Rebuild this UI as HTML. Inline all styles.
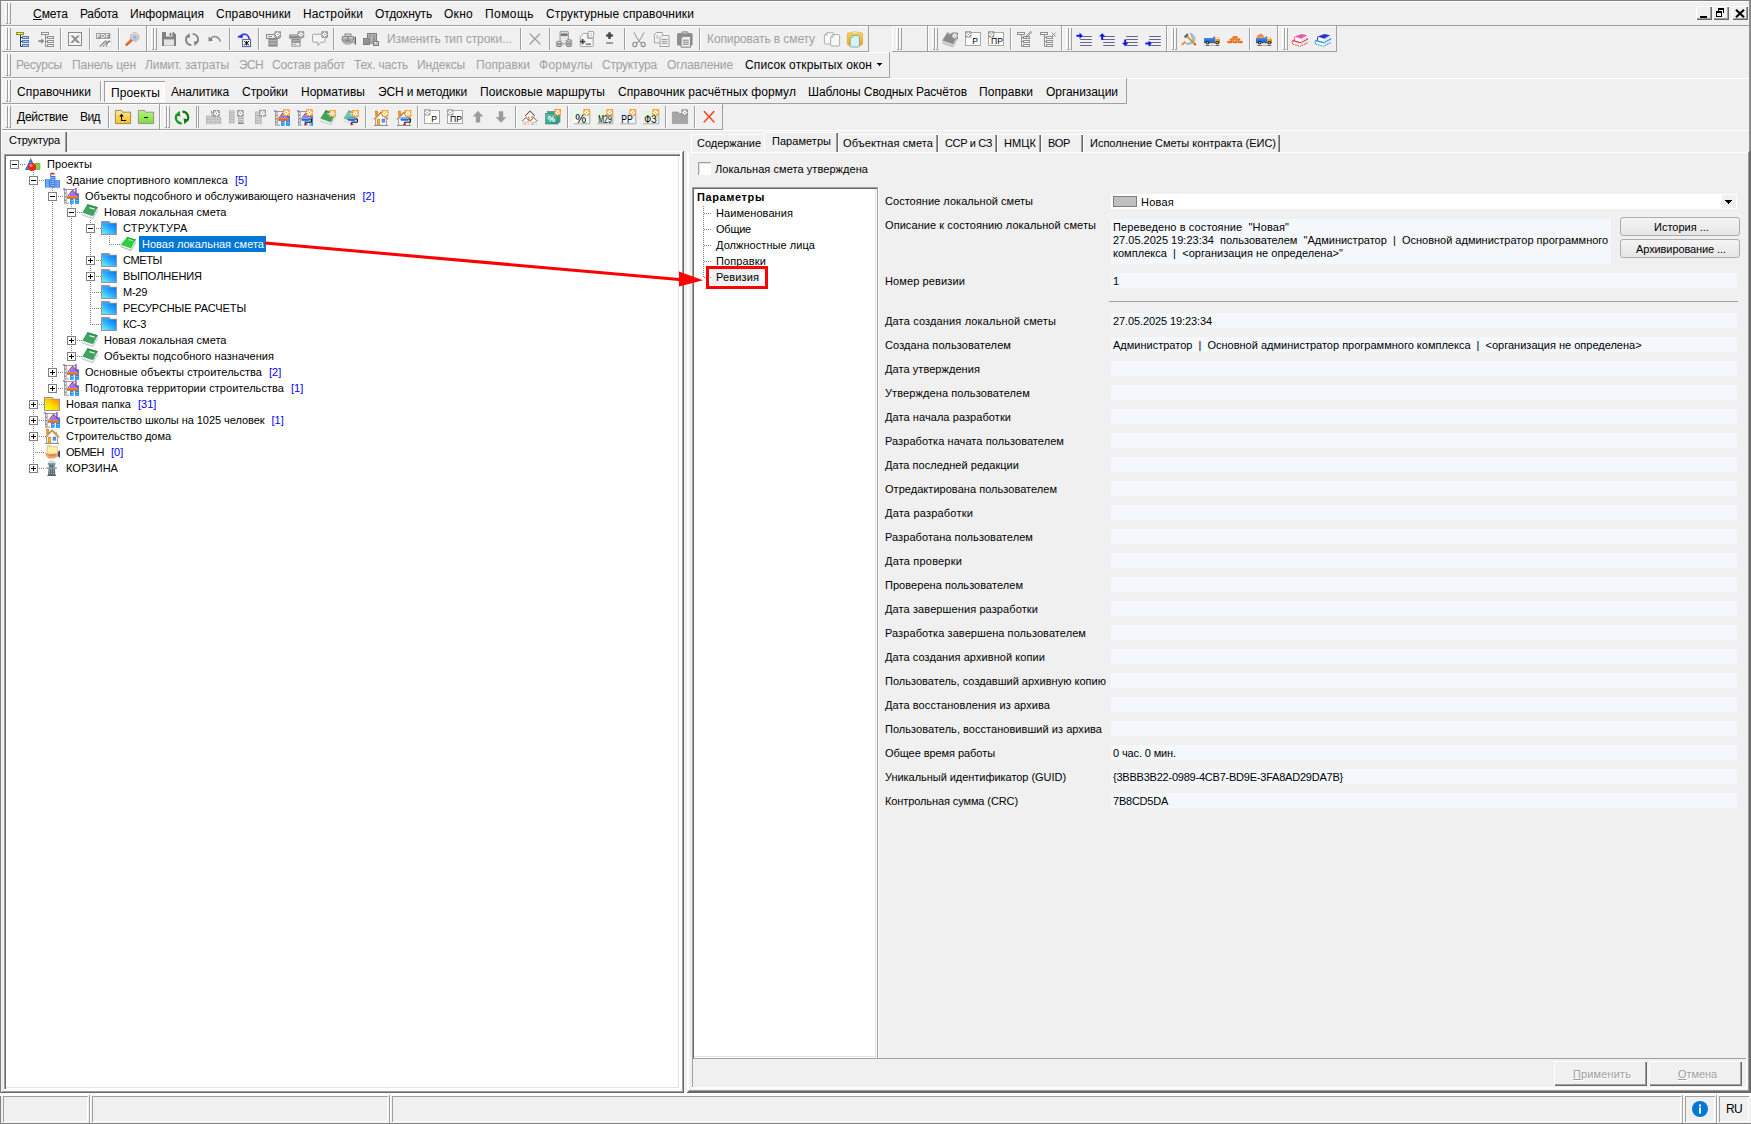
<!DOCTYPE html>
<html lang="ru"><head><meta charset="utf-8"><title>Смета</title>
<style>
html,body{margin:0;padding:0}
body{width:1751px;height:1124px;background:#f0f0f0;position:relative;overflow:hidden;font-family:"Liberation Sans",sans-serif}
.t{position:absolute;white-space:pre;}
.i{position:absolute;overflow:visible}
</style></head><body>
<svg width="0" height="0" style="position:absolute"><defs><linearGradient id="gfb" x1="0" y1="1" x2="1" y2="0"><stop offset="0" stop-color="#6cf4ff"/><stop offset="0.55" stop-color="#2aa8ff"/><stop offset="1" stop-color="#0a72f0"/></linearGradient><linearGradient id="gfy" x1="0" y1="1" x2="1" y2="0"><stop offset="0" stop-color="#ffff10"/><stop offset="0.5" stop-color="#ffd800"/><stop offset="1" stop-color="#ff8c00"/></linearGradient><radialGradient id="glens" cx="0.5" cy="0.55" r="0.5"><stop offset="0" stop-color="#8aa8ec"/><stop offset="0.7" stop-color="#bcd0f6"/><stop offset="1" stop-color="#f4f8ff"/></radialGradient><linearGradient id="gclip" x1="0" y1="0" x2="0" y2="1"><stop offset="0" stop-color="#ffd648"/><stop offset="1" stop-color="#ffa600"/></linearGradient><linearGradient id="gtrk" x1="0" y1="0" x2="0" y2="1"><stop offset="0" stop-color="#4aa0f8"/><stop offset="1" stop-color="#1a5cd0"/></linearGradient><linearGradient id="gcab" x1="0" y1="0" x2="1" y2="1"><stop offset="0" stop-color="#ffc040"/><stop offset="1" stop-color="#e87800"/></linearGradient><linearGradient id="gfu" x1="0" y1="0" x2="0" y2="1"><stop offset="0" stop-color="#ffe98a"/><stop offset="1" stop-color="#ffbe1e"/></linearGradient><linearGradient id="gfg" x1="0" y1="0" x2="0" y2="1"><stop offset="0" stop-color="#b6f47a"/><stop offset="1" stop-color="#7cdc3a"/></linearGradient><linearGradient id="gteal" x1="0" y1="0" x2="1" y2="1"><stop offset="0" stop-color="#58c4a8"/><stop offset="1" stop-color="#1e9880"/></linearGradient></defs></svg>
<div style="position:absolute;left:0px;top:0px;width:1751px;height:1px;background:#828282"></div>
<div style="position:absolute;left:0px;top:0px;width:1px;height:1124px;background:#828282"></div>
<div style="position:absolute;left:1px;top:1px;width:1749px;height:1px;background:#fff"></div>
<div style="position:absolute;left:1px;top:25px;width:1748px;height:1px;background:#a0a0a0"></div>
<div style="position:absolute;left:5px;top:3px;width:1px;height:20px;background:#fff"></div>
<div style="position:absolute;left:5px;top:3px;width:2px;height:1px;background:#fff"></div>
<div style="position:absolute;left:7px;top:3px;width:1px;height:21px;background:#a0a0a0"></div>
<div style="position:absolute;left:6px;top:23px;width:2px;height:1px;background:#a0a0a0"></div>
<div style="position:absolute;left:8px;top:3px;width:1px;height:20px;background:#fff"></div>
<div style="position:absolute;left:8px;top:3px;width:2px;height:1px;background:#fff"></div>
<div style="position:absolute;left:10px;top:3px;width:1px;height:21px;background:#a0a0a0"></div>
<div style="position:absolute;left:9px;top:23px;width:2px;height:1px;background:#a0a0a0"></div>
<div class="t " style="left:33px;top:7px;font-size:12px;line-height:14px;color:#000;letter-spacing:-0.047px;"><u>С</u>мета</div>
<div class="t " style="left:80px;top:7px;font-size:12px;line-height:14px;color:#000;letter-spacing:-0.268px;">Работа</div>
<div class="t " style="left:130px;top:7px;font-size:12px;line-height:14px;color:#000;letter-spacing:0.052px;">Информация</div>
<div class="t " style="left:216px;top:7px;font-size:12px;line-height:14px;color:#000;letter-spacing:0.209px;">Справочники</div>
<div class="t " style="left:303px;top:7px;font-size:12px;line-height:14px;color:#000;letter-spacing:0.128px;">Настройки</div>
<div class="t " style="left:375px;top:7px;font-size:12px;line-height:14px;color:#000;letter-spacing:-0.151px;">Отдохнуть</div>
<div class="t " style="left:444px;top:7px;font-size:12px;line-height:14px;color:#000;letter-spacing:0.277px;">Окно</div>
<div class="t " style="left:485px;top:7px;font-size:12px;line-height:14px;color:#000;letter-spacing:0.440px;">Помощь</div>
<div class="t " style="left:546px;top:7px;font-size:12px;line-height:14px;color:#000;letter-spacing:0.107px;">Структурные справочники</div>
<div style="position:absolute;left:1696px;top:6px;width:16px;height:14px;background:#f0f0f0;box-shadow:inset 1px 1px 0 #fff, inset -1px -1px 0 #696969, inset -2px -2px 0 #a0a0a0"></div>
<div style="position:absolute;left:1713px;top:6px;width:16px;height:14px;background:#f0f0f0;box-shadow:inset 1px 1px 0 #fff, inset -1px -1px 0 #696969, inset -2px -2px 0 #a0a0a0"></div>
<div style="position:absolute;left:1732px;top:6px;width:16px;height:14px;background:#f0f0f0;box-shadow:inset 1px 1px 0 #fff, inset -1px -1px 0 #696969, inset -2px -2px 0 #a0a0a0"></div>
<div style="position:absolute;left:1700px;top:16px;width:7px;height:2px;background:#000"></div>
<svg class="i" style="left:1715px;top:8px" width="12" height="10" viewBox="0 0 12 10" shape-rendering="crispEdges"><path d="M3 0h6v5h-1v-3h-4v1h-1z M1 3h6v6h-6z M2 5v3h4v-3z" fill="#000" fill-rule="evenodd"/></svg>
<svg class="i" style="left:1735px;top:9px" width="10" height="9" viewBox="0 0 10 9"><path d="M1 0.8L9 8.2M9 0.8L1 8.2" stroke="#000" stroke-width="2.1"/></svg>
<div style="position:absolute;left:2px;top:26px;width:145px;height:1px;background:#fff"></div>
<div style="position:absolute;left:2px;top:26px;width:1px;height:26px;background:#fff"></div>
<div style="position:absolute;left:2px;top:51px;width:145px;height:1px;background:#a0a0a0"></div>
<div style="position:absolute;left:146px;top:26px;width:1px;height:26px;background:#a0a0a0"></div>
<div style="position:absolute;left:5px;top:28px;width:1px;height:21px;background:#fff"></div>
<div style="position:absolute;left:5px;top:28px;width:2px;height:1px;background:#fff"></div>
<div style="position:absolute;left:7px;top:28px;width:1px;height:22px;background:#a0a0a0"></div>
<div style="position:absolute;left:6px;top:49px;width:2px;height:1px;background:#a0a0a0"></div>
<div style="position:absolute;left:8px;top:28px;width:1px;height:21px;background:#fff"></div>
<div style="position:absolute;left:8px;top:28px;width:2px;height:1px;background:#fff"></div>
<div style="position:absolute;left:10px;top:28px;width:1px;height:22px;background:#a0a0a0"></div>
<div style="position:absolute;left:9px;top:49px;width:2px;height:1px;background:#a0a0a0"></div>
<svg class="i" style="left:16px;top:32px" width="16" height="16" viewBox="0 0 16 16"><rect x="0.5" y="0.5" width="7" height="2" fill="#ffff00" stroke="#8c8c3c"/><path d="M4.5 3v11.5h2M4.5 5.5h2M4.5 9.5h2" stroke="#1f3864" fill="none"/><rect x="6.5" y="4.5" width="6" height="2" fill="#a9d1ff" stroke="#5a78b0"/><rect x="6.5" y="8.5" width="6" height="2" fill="#a9d1ff" stroke="#5a78b0"/><rect x="6.5" y="12.5" width="6" height="2" fill="#a9d1ff" stroke="#5a78b0"/></svg>
<svg class="i" style="left:39px;top:32px" width="16" height="16" viewBox="0 0 16 16"><g transform="translate(-1 0)"><rect x="3.5" y="0.5" width="7" height="2" fill="#f4f4f4" stroke="#909090"/><path d="M7.5 3v11.5h2M7.5 5.5h2M7.5 9.5h2" stroke="#909090" fill="none"/><rect x="9.5" y="4.5" width="6" height="2" fill="#f4f4f4" stroke="#909090"/><rect x="9.5" y="8.5" width="6" height="2" fill="#f4f4f4" stroke="#909090"/><rect x="9.5" y="12.5" width="6" height="2" fill="#f4f4f4" stroke="#909090"/><path d="M0.3 8.3h3v-2l3 2.8l-3 2.8v-2h-3z" fill="#8a8a8a"/></g></svg>
<svg class="i" style="left:68px;top:32px" width="16" height="16" viewBox="0 0 16 16"><rect x="0.5" y="0.5" width="13" height="13" fill="#f6f6f6" stroke="#8a8a8a"/><path d="M2.4 3.4h3l1.8 2.2L9.4 3.4h2.6L8.6 7l3.6 4H9.2L7 8.6L5 11H2.2L5.8 7z" fill="#909090"/></svg>
<svg class="i" style="left:96px;top:32px" width="16" height="16" viewBox="0 0 16 16"><path d="M3.2 0h9l3 2.6V14.6H3.2z" fill="#fff" stroke="#c8c8c8" stroke-width="0.5"/><rect x="0" y="1.2" width="14.2" height="5.6" fill="#8c8c8c"/><text x="7.1" y="5.9" font-family="Liberation Sans,sans-serif" font-size="5.6" font-weight="bold" fill="#fff" text-anchor="middle" letter-spacing="0.6">PDF</text><path d="M4 14.4C6 12 8 10 10.4 8.4M7 14.4C8.6 12 10.6 10 13.6 8.6M10.4 14.4C10.4 12 11.6 10 14.6 9.4" stroke="#8c8c8c" stroke-width="1.3" fill="none"/></svg>
<svg class="i" style="left:125px;top:32px" width="16" height="16" viewBox="0 0 16 16"><path d="M6.6 8L1.6 12.6" stroke="#d8600c" stroke-width="2.6" stroke-linecap="round"/><path d="M6.2 7.8L1.4 12.2" stroke="#f59040" stroke-width="0.8" stroke-linecap="round"/><circle cx="9.8" cy="4.9" r="4.3" fill="url(#glens)" stroke="#e8915a" stroke-width="0.8"/></svg>
<div style="position:absolute;left:60px;top:28px;width:1px;height:22px;background:#a0a0a0"></div>
<div style="position:absolute;left:61px;top:28px;width:1px;height:22px;background:#fff"></div>
<div style="position:absolute;left:89px;top:28px;width:1px;height:22px;background:#a0a0a0"></div>
<div style="position:absolute;left:90px;top:28px;width:1px;height:22px;background:#fff"></div>
<div style="position:absolute;left:118px;top:28px;width:1px;height:22px;background:#a0a0a0"></div>
<div style="position:absolute;left:119px;top:28px;width:1px;height:22px;background:#fff"></div>
<div style="position:absolute;left:147px;top:26px;width:722px;height:1px;background:#fff"></div>
<div style="position:absolute;left:147px;top:26px;width:1px;height:26px;background:#fff"></div>
<div style="position:absolute;left:147px;top:51px;width:722px;height:1px;background:#a0a0a0"></div>
<div style="position:absolute;left:868px;top:26px;width:1px;height:26px;background:#a0a0a0"></div>
<div style="position:absolute;left:151px;top:28px;width:1px;height:21px;background:#fff"></div>
<div style="position:absolute;left:151px;top:28px;width:2px;height:1px;background:#fff"></div>
<div style="position:absolute;left:153px;top:28px;width:1px;height:22px;background:#a0a0a0"></div>
<div style="position:absolute;left:152px;top:49px;width:2px;height:1px;background:#a0a0a0"></div>
<div style="position:absolute;left:154px;top:28px;width:1px;height:21px;background:#fff"></div>
<div style="position:absolute;left:154px;top:28px;width:2px;height:1px;background:#fff"></div>
<div style="position:absolute;left:156px;top:28px;width:1px;height:22px;background:#a0a0a0"></div>
<div style="position:absolute;left:155px;top:49px;width:2px;height:1px;background:#a0a0a0"></div>
<svg class="i" style="left:161px;top:32px" width="16" height="16" viewBox="0 0 16 16"><path d="M1 0h11.4l2.6 2.4V14H1z" fill="#828282"/><rect x="5" y="0" width="6.4" height="4.6" fill="#ececec"/><rect x="8.6" y="1" width="1.6" height="2.8" fill="#707070"/><rect x="3" y="7.4" width="10" height="6.2" fill="#e4e4e4"/></svg>
<svg class="i" style="left:184px;top:32px" width="16" height="16" viewBox="0 0 16 16"><path d="M7.4 13A5.4 5.4 0 0 1 3 4.4" stroke="#808080" stroke-width="1.7" fill="none"/><path d="M1 5.2L5.4 1L6 5.8z" fill="#808080"/><path d="M8.6 2A5.4 5.4 0 0 1 13 10.6" stroke="#808080" stroke-width="1.7" fill="none"/><path d="M15 9.8L10.6 14L10 9.2z" fill="#808080"/></svg>
<svg class="i" style="left:207px;top:32px" width="16" height="16" viewBox="0 0 16 16"><path d="M3.4 7.4C6 3.2 11.6 3.6 13.4 9.6" stroke="#8a8a8a" stroke-width="1.5" fill="none"/><path d="M1.6 4.6V9.4L6.2 8.6z" fill="#808080"/></svg>
<svg class="i" style="left:237px;top:32px" width="16" height="16" viewBox="0 0 16 16"><path d="M3.6 5.2C5 1 11.2 0.8 12.4 7.4" stroke="#3c3cf0" stroke-width="1.7" fill="none"/><path d="M0.8 4L6 2.4L5.4 6.6z" fill="#2a2af0"/><path d="M0.8 4.2h3v1.4h-3z" fill="#2a2af0"/><rect x="5.6" y="7.6" width="8" height="7" fill="#fff" stroke="#4a5aa8" stroke-width="1"/><path d="M7.2 9.2L12 13.2M12 9.2L7.2 13.2M9.6 9V13.4" stroke="#000" stroke-width="1"/></svg>
<svg class="i" style="left:266px;top:32px" width="16" height="16" viewBox="0 0 16 16"><rect x="0.5" y="2.5" width="12.5" height="4" fill="#ececec" stroke="#8a8a8a"/><path d="M2.4 4.6h3.6" stroke="#8a8a8a" stroke-width="1"/><rect x="2.4" y="7" width="9.2" height="7.6" fill="#8a8a8a"/><path d="M3.4 8.8h7.2M3.4 11.6h7.2" stroke="#b4b4b4" stroke-width="1.6"/><rect x="8.4" y="-0.8" width="6.6" height="6.6" rx="0.7" fill="#8a8a8a"/><path d="M8.93 2.50L14.47 2.50M11.70 -0.27L11.70 5.27M9.74 0.54L13.66 4.46M9.74 4.46L13.66 0.54" stroke="#fff" stroke-width="0.99"/><circle cx="11.7" cy="2.5" r="1.72" fill="#fff"/><circle cx="11.7" cy="2.5" r="0.72" fill="#8a8a8a"/></svg>
<svg class="i" style="left:289px;top:32px" width="16" height="16" viewBox="0 0 16 16"><rect x="0.2" y="2.4" width="12.8" height="4.2" fill="#8a8a8a"/><path d="M1 3.6h10" stroke="#b4b4b4" stroke-width="1.2"/><rect x="2.4" y="7" width="9.2" height="7.6" fill="#8a8a8a"/><path d="M3.4 8.6h7.2" stroke="#b4b4b4" stroke-width="1.4"/><rect x="3.4" y="10.8" width="7.2" height="3" fill="#ececec"/><path d="M4.4 12.3h3" stroke="#8a8a8a" stroke-width="0.9"/><rect x="8.6" y="-0.8" width="6.6" height="6.6" rx="0.7" fill="#8a8a8a"/><path d="M9.13 2.50L14.67 2.50M11.90 -0.27L11.90 5.27M9.94 0.54L13.86 4.46M9.94 4.46L13.86 0.54" stroke="#fff" stroke-width="0.99"/><circle cx="11.899999999999999" cy="2.5" r="1.72" fill="#fff"/><circle cx="11.899999999999999" cy="2.5" r="0.72" fill="#8a8a8a"/></svg>
<svg class="i" style="left:312px;top:32px" width="16" height="16" viewBox="0 0 16 16"><path d="M1.6 2.2h10.6a1 1 0 0 1 1 1v6a1 1 0 0 1 -1 1H9L6 13.6V10.2H1.6a1 1 0 0 1 -1 -1V3.2a1 1 0 0 1 1 -1z" fill="#f4f4f4" stroke="#9a9a9a" stroke-width="0.9"/><rect x="9.4" y="-0.8" width="6.6" height="6.6" rx="0.7" fill="#8a8a8a"/><path d="M9.93 2.50L15.47 2.50M12.70 -0.27L12.70 5.27M10.74 0.54L14.66 4.46M10.74 4.46L14.66 0.54" stroke="#fff" stroke-width="0.99"/><circle cx="12.7" cy="2.5" r="1.72" fill="#fff"/><circle cx="12.7" cy="2.5" r="0.72" fill="#8a8a8a"/></svg>
<svg class="i" style="left:340px;top:32px" width="16" height="16" viewBox="0 0 16 16"><path d="M0.4 5.4C3 8.6 10 8.4 14 6.6V10.4C10 13.4 5 13.8 2.4 10.2z" fill="#b4b4b4"/><path d="M2 8.4C5 10.6 10 10.4 13 9" stroke="#8a8a8a" stroke-width="0.9" fill="none"/><rect x="5" y="2" width="6" height="2.4" fill="#dcdcdc" stroke="#7c7c7c" stroke-width="0.9"/><rect x="2.4" y="4.6" width="5.4" height="2.4" fill="#dcdcdc" stroke="#7c7c7c" stroke-width="0.9"/><rect x="8" y="4.6" width="5.4" height="2.4" fill="#dcdcdc" stroke="#7c7c7c" stroke-width="0.9"/><path d="M5 8.2h5" stroke="#7c7c7c" stroke-width="1.2"/><path d="M14.6 5L15.8 4.6V13L14.6 12z" fill="#404040"/></svg>
<svg class="i" style="left:363px;top:32px" width="16" height="16" viewBox="0 0 16 16"><rect x="4.5" y="1.5" width="9" height="9.6" fill="#b0b0b0" stroke="#7c7c7c"/><path d="M6 4h2M10 4h2M11 5v3M9.6 8h3" stroke="#7c7c7c" stroke-width="0.9"/><rect x="0.5" y="6.5" width="6" height="6" fill="#a4a4a4" stroke="#7c7c7c"/><path d="M2.2 7.4v4.4M3.6 7.4v4.4M5 7.4v4.4" stroke="#7c7c7c" stroke-width="0.7"/><rect x="10.5" y="9.5" width="5" height="4" fill="#c0c0c0" stroke="#7c7c7c"/><rect x="11.2" y="10" width="1.6" height="1" fill="#fff"/></svg>
<svg class="i" style="left:527px;top:32px" width="16" height="16" viewBox="0 0 16 16"><path d="M3.2 2L13 12M12.6 2L3 12" stroke="#a0a0a0" stroke-width="1.3" stroke-linecap="round"/></svg>
<svg class="i" style="left:556px;top:32px" width="16" height="16" viewBox="0 0 16 16"><rect x="4" y="-0.6" width="8.4" height="12.6" rx="0.8" fill="#d8d8d8" stroke="#8a8a8a" stroke-width="0.8"/><rect x="4.8" y="1.6" width="6.8" height="2.2" fill="#707070"/><path d="M5.4 5.6h1.4M7.6 5.6h1.4M9.8 5.6h1.4M5.4 7.6h1.4M7.6 7.6h1.4M9.8 7.6h1.4M5.4 9.6h1.4M7.6 9.6h1.4M9.8 9.6h1.4" stroke="#fff" stroke-width="1.2"/><g fill="#e0e0e0" stroke="#707070" stroke-width="0.8"><ellipse cx="3" cy="13.6" rx="2.8" ry="1.1"/><ellipse cx="3" cy="12" rx="2.8" ry="1.1"/><ellipse cx="3" cy="10.4" rx="2.8" ry="1.1"/><ellipse cx="13" cy="13.6" rx="2.8" ry="1.1"/><ellipse cx="13" cy="12" rx="2.8" ry="1.1"/><ellipse cx="13" cy="10.4" rx="2.8" ry="1.1"/><ellipse cx="13" cy="8.8" rx="2.8" ry="1.1"/></g></svg>
<svg class="i" style="left:579px;top:32px" width="16" height="16" viewBox="0 0 16 16"><path d="M4.6 1.4h4v5h5.6v7.2a1 1 0 0 1 -1 1H2.2a1 1 0 0 1 -1 -1V4.6z" fill="#f4f4f4" stroke="#9a9a9a" stroke-width="0.9"/><rect x="9.2" y="-0.6" width="5.4" height="6.4" rx="0.6" fill="#f8f8f8" stroke="#9a9a9a" stroke-width="0.9"/><path d="M11 1.6h2M11 3.4h2" stroke="#b0b0b0" stroke-width="0.7"/><path d="M1 9.6h5.2M3.6 7v5.2" stroke="#404040" stroke-width="1.7"/><path d="M6.6 12.2h5.4" stroke="#8a8a8a" stroke-width="1.7"/></svg>
<svg class="i" style="left:602px;top:32px" width="16" height="16" viewBox="0 0 16 16"><path d="M4.2 3.6h6.6M7.5 0.3v6.6" stroke="#484848" stroke-width="2.5"/><path d="M4.2 11h6.8" stroke="#9a9a9a" stroke-width="2"/></svg>
<svg class="i" style="left:631px;top:32px" width="16" height="16" viewBox="0 0 16 16"><path d="M3 0.4C5 5 7 8.6 10.6 11.6M13 0.4C11 5 9 8.6 5.4 11.6" stroke="#9a9a9a" stroke-width="1.1" fill="none"/><ellipse cx="3.8" cy="12.4" rx="2" ry="2.2" fill="none" stroke="#8a8a8a" stroke-width="1.1"/><ellipse cx="12.2" cy="12.4" rx="2" ry="2.2" fill="none" stroke="#8a8a8a" stroke-width="1.1"/></svg>
<svg class="i" style="left:654px;top:32px" width="16" height="16" viewBox="0 0 16 16"><path d="M2.4 0.5h6l0 0v10.4h-8v-8.4z" fill="#f4f4f4" stroke="#9a9a9a" stroke-width="0.9"/><path d="M8.4 3.5h6.6v11h-9v-8.6z" fill="#f4f4f4" stroke="#9a9a9a" stroke-width="0.9"/><path d="M7.6 7.4h5.8M7.6 9.4h5.8M7.6 11.4h5.8" stroke="#8a8a8a" stroke-width="0.9"/><path d="M2 4h3M2 6h3" stroke="#a8a8a8" stroke-width="0.8"/></svg>
<svg class="i" style="left:677px;top:32px" width="16" height="16" viewBox="0 0 16 16"><rect x="0" y="1" width="15.6" height="12.6" rx="1.6" fill="#8e8e8e"/><rect x="4.6" y="-0.4" width="6.4" height="2.4" rx="1" fill="#b8b8b8" stroke="#8a8a8a" stroke-width="0.6"/><path d="M6 4.2h7.6v11h-9.6v-8.6z" fill="#ececec" stroke="#7c7c7c" stroke-width="0.9"/><path d="M5.8 8.2h6M5.8 10.2h6M5.8 12.2h6" stroke="#7c7c7c" stroke-width="0.9"/></svg>
<svg class="i" style="left:824px;top:32px" width="16" height="16" viewBox="0 0 16 16"><path d="M2.8 0.8h6.4a0.8 0.8 0 0 1 0.8 0.8v9.6a0.8 0.8 0 0 1 -0.8 0.8H1.2a0.8 0.8 0 0 1 -0.8 -0.8V3.2z" fill="#fcfcfc" stroke="#a4a4a4" stroke-width="0.9"/><path d="M0.6 3.2h2.4v-2.4" fill="none" stroke="#a4a4a4" stroke-width="0.8"/><path d="M8.6 2.6h6.2a0.8 0.8 0 0 1 0.8 0.8v9.8a0.8 0.8 0 0 1 -0.8 0.8H7.4a0.8 0.8 0 0 1 -0.8 -0.8V5z" fill="#f8f8f8" stroke="#a4a4a4" stroke-width="0.9"/><path d="M6.8 5h2.2v-2.4" fill="none" stroke="#a4a4a4" stroke-width="0.8"/></svg>
<svg class="i" style="left:847px;top:32px" width="16" height="16" viewBox="0 0 16 16"><rect x="0.3" y="0.8" width="15.2" height="12.4" rx="1.4" fill="url(#gclip)" stroke="#d89a50" stroke-width="0.6"/><ellipse cx="8" cy="0.8" rx="3.2" ry="1.1" fill="#fff2a0" stroke="#d8b040" stroke-width="0.6"/><path d="M5 3.6h6.4a1 1 0 0 1 1 1v9.4a1 1 0 0 1 -1 1H4.2a1 1 0 0 1 -1 -1V5.4z" fill="#d6f2f2" stroke="#6e9aa8" stroke-width="0.8"/><path d="M3.4 5.6h2v-2" fill="#fff" stroke="#6e9aa8" stroke-width="0.6"/></svg>
<div style="position:absolute;left:229px;top:28px;width:1px;height:22px;background:#a0a0a0"></div>
<div style="position:absolute;left:230px;top:28px;width:1px;height:22px;background:#fff"></div>
<div style="position:absolute;left:258px;top:28px;width:1px;height:22px;background:#a0a0a0"></div>
<div style="position:absolute;left:259px;top:28px;width:1px;height:22px;background:#fff"></div>
<div style="position:absolute;left:333px;top:28px;width:1px;height:22px;background:#a0a0a0"></div>
<div style="position:absolute;left:334px;top:28px;width:1px;height:22px;background:#fff"></div>
<div style="position:absolute;left:520px;top:28px;width:1px;height:22px;background:#a0a0a0"></div>
<div style="position:absolute;left:521px;top:28px;width:1px;height:22px;background:#fff"></div>
<div style="position:absolute;left:549px;top:28px;width:1px;height:22px;background:#a0a0a0"></div>
<div style="position:absolute;left:550px;top:28px;width:1px;height:22px;background:#fff"></div>
<div style="position:absolute;left:624px;top:28px;width:1px;height:22px;background:#a0a0a0"></div>
<div style="position:absolute;left:625px;top:28px;width:1px;height:22px;background:#fff"></div>
<div style="position:absolute;left:699px;top:28px;width:1px;height:22px;background:#a0a0a0"></div>
<div style="position:absolute;left:700px;top:28px;width:1px;height:22px;background:#fff"></div>
<div class="t " style="left:387px;top:32px;font-size:12px;line-height:14px;color:#a0a0a0;letter-spacing:-0.059px;">Изменить тип строки...</div>
<div class="t " style="left:707px;top:32px;font-size:12px;line-height:14px;color:#a0a0a0;letter-spacing:-0.101px;">Копировать в смету</div>
<div style="position:absolute;left:892px;top:26px;width:36px;height:1px;background:#fff"></div>
<div style="position:absolute;left:892px;top:26px;width:1px;height:26px;background:#fff"></div>
<div style="position:absolute;left:892px;top:51px;width:36px;height:1px;background:#a0a0a0"></div>
<div style="position:absolute;left:927px;top:26px;width:1px;height:26px;background:#a0a0a0"></div>
<div style="position:absolute;left:896px;top:28px;width:1px;height:21px;background:#fff"></div>
<div style="position:absolute;left:896px;top:28px;width:2px;height:1px;background:#fff"></div>
<div style="position:absolute;left:898px;top:28px;width:1px;height:22px;background:#a0a0a0"></div>
<div style="position:absolute;left:897px;top:49px;width:2px;height:1px;background:#a0a0a0"></div>
<div style="position:absolute;left:899px;top:28px;width:1px;height:21px;background:#fff"></div>
<div style="position:absolute;left:899px;top:28px;width:2px;height:1px;background:#fff"></div>
<div style="position:absolute;left:901px;top:28px;width:1px;height:22px;background:#a0a0a0"></div>
<div style="position:absolute;left:900px;top:49px;width:2px;height:1px;background:#a0a0a0"></div>
<div style="position:absolute;left:928px;top:26px;width:134px;height:1px;background:#fff"></div>
<div style="position:absolute;left:928px;top:26px;width:1px;height:26px;background:#fff"></div>
<div style="position:absolute;left:928px;top:51px;width:134px;height:1px;background:#a0a0a0"></div>
<div style="position:absolute;left:1061px;top:26px;width:1px;height:26px;background:#a0a0a0"></div>
<div style="position:absolute;left:932px;top:28px;width:1px;height:21px;background:#fff"></div>
<div style="position:absolute;left:932px;top:28px;width:2px;height:1px;background:#fff"></div>
<div style="position:absolute;left:934px;top:28px;width:1px;height:22px;background:#a0a0a0"></div>
<div style="position:absolute;left:933px;top:49px;width:2px;height:1px;background:#a0a0a0"></div>
<div style="position:absolute;left:935px;top:28px;width:1px;height:21px;background:#fff"></div>
<div style="position:absolute;left:935px;top:28px;width:2px;height:1px;background:#fff"></div>
<div style="position:absolute;left:937px;top:28px;width:1px;height:22px;background:#a0a0a0"></div>
<div style="position:absolute;left:936px;top:49px;width:2px;height:1px;background:#a0a0a0"></div>
<svg class="i" style="left:942px;top:32px" width="16" height="16" viewBox="0 0 16 16"><path d="M0.3 8.6L11 12.2L15.8 3.8V6.6L11 15.4L0.3 11.6z" fill="#d8d8d8"/><path d="M0.3 11L11 14.7L15.8 6" stroke="#a8a8a8" stroke-width="0.8" fill="none"/><path d="M5.4 0.3L15.8 3.2L11 12.2L0.3 8.4z" fill="#8a8a8a"/><path d="M6.4 1.4L8.4 2" stroke="#e0e0e0" stroke-width="1.2"/><rect x="9.6" y="0.6" width="6.4" height="6.4" rx="0.7" fill="#8c8c8c"/><path d="M10.11 3.80L15.49 3.80M12.80 1.11L12.80 6.49M10.90 1.90L14.70 5.70M10.90 5.70L14.70 1.90" stroke="#fff" stroke-width="0.96"/><circle cx="12.8" cy="3.8000000000000003" r="1.66" fill="#fff"/><circle cx="12.8" cy="3.8000000000000003" r="0.70" fill="#8c8c8c"/></svg>
<svg class="i" style="left:965px;top:32px" width="16" height="16" viewBox="0 0 16 16"><rect x="0.5" y="0.5" width="15" height="13" fill="#fff" stroke="#a8a8a8"/><rect x="0" y="-0.8" width="6.4" height="6.4" rx="0.7" fill="#8c8c8c"/><path d="M0.51 2.40L5.89 2.40M3.20 -0.29L3.20 5.09M1.30 0.50L5.10 4.30M1.30 4.30L5.10 0.50" stroke="#fff" stroke-width="0.96"/><circle cx="3.2" cy="2.4000000000000004" r="1.66" fill="#fff"/><circle cx="3.2" cy="2.4000000000000004" r="0.70" fill="#8c8c8c"/><text x="10" y="12.4" font-family="Liberation Sans,sans-serif" font-size="8.6" fill="#000" text-anchor="middle">Р</text></svg>
<svg class="i" style="left:988px;top:32px" width="16" height="16" viewBox="0 0 16 16"><rect x="0.5" y="0.5" width="15" height="13" fill="#fff" stroke="#a8a8a8"/><rect x="0" y="-0.8" width="6.4" height="6.4" rx="0.7" fill="#8c8c8c"/><path d="M0.51 2.40L5.89 2.40M3.20 -0.29L3.20 5.09M1.30 0.50L5.10 4.30M1.30 4.30L5.10 0.50" stroke="#fff" stroke-width="0.96"/><circle cx="3.2" cy="2.4000000000000004" r="1.66" fill="#fff"/><circle cx="3.2" cy="2.4000000000000004" r="0.70" fill="#8c8c8c"/><text x="9" y="12.4" font-family="Liberation Sans,sans-serif" font-size="8.6" fill="#000" text-anchor="middle">ПР</text></svg>
<svg class="i" style="left:1017px;top:32px" width="16" height="16" viewBox="0 0 16 16"><rect x="0.5" y="0.5" width="7" height="2" fill="#f4f4f4" stroke="#909090"/><path d="M4.5 3v11.5h2M4.5 5.5h2M4.5 9.5h2" stroke="#909090" fill="none"/><rect x="6.5" y="4.5" width="6" height="2" fill="#f4f4f4" stroke="#909090"/><rect x="6.5" y="8.5" width="6" height="2" fill="#f4f4f4" stroke="#909090"/><rect x="6.5" y="12.5" width="6" height="2" fill="#f4f4f4" stroke="#909090"/><path d="M9.4 4.6L14.4 -0.4" stroke="#8a8a8a" stroke-width="2"/><path d="M9.8 4.2L14 0" stroke="#e0e0e0" stroke-width="0.7"/><path d="M8.4 5.8L9 4.2L10 5.2z" fill="#606060"/></svg>
<svg class="i" style="left:1040px;top:32px" width="16" height="16" viewBox="0 0 16 16"><rect x="0.5" y="0.5" width="7" height="2" fill="#f4f4f4" stroke="#909090"/><path d="M4.5 3v11.5h2M4.5 5.5h2M4.5 9.5h2" stroke="#909090" fill="none"/><rect x="6.5" y="4.5" width="6" height="2" fill="#f4f4f4" stroke="#909090"/><rect x="6.5" y="8.5" width="6" height="2" fill="#f4f4f4" stroke="#909090"/><rect x="6.5" y="12.5" width="6" height="2" fill="#f4f4f4" stroke="#909090"/><path d="M11.6 0.6L15.6 4.6M15.6 0.6L11.6 4.6" stroke="#8a8a8a" stroke-width="1"/></svg>
<div style="position:absolute;left:1010px;top:28px;width:1px;height:22px;background:#a0a0a0"></div>
<div style="position:absolute;left:1011px;top:28px;width:1px;height:22px;background:#fff"></div>
<div style="position:absolute;left:1062px;top:26px;width:105px;height:1px;background:#fff"></div>
<div style="position:absolute;left:1062px;top:26px;width:1px;height:26px;background:#fff"></div>
<div style="position:absolute;left:1062px;top:51px;width:105px;height:1px;background:#a0a0a0"></div>
<div style="position:absolute;left:1166px;top:26px;width:1px;height:26px;background:#a0a0a0"></div>
<div style="position:absolute;left:1066px;top:28px;width:1px;height:21px;background:#fff"></div>
<div style="position:absolute;left:1066px;top:28px;width:2px;height:1px;background:#fff"></div>
<div style="position:absolute;left:1068px;top:28px;width:1px;height:22px;background:#a0a0a0"></div>
<div style="position:absolute;left:1067px;top:49px;width:2px;height:1px;background:#a0a0a0"></div>
<div style="position:absolute;left:1069px;top:28px;width:1px;height:21px;background:#fff"></div>
<div style="position:absolute;left:1069px;top:28px;width:2px;height:1px;background:#fff"></div>
<div style="position:absolute;left:1071px;top:28px;width:1px;height:22px;background:#a0a0a0"></div>
<div style="position:absolute;left:1070px;top:49px;width:2px;height:1px;background:#a0a0a0"></div>
<svg class="i" style="left:1076px;top:32px" width="16" height="16" viewBox="0 0 16 16"><path d="M4.2 4.5h11.6M4.2 7.5h11.6M4.2 10.5h11.6M4.2 13.5h11.6" stroke="#66668a" stroke-width="1"/><path d="M0.4 2.8h3.2v-2.2l3 3.2l-3 3.2v-2.2h-3.2z" fill="#1212e6"/></svg>
<svg class="i" style="left:1099px;top:32px" width="16" height="16" viewBox="0 0 16 16"><path d="M4.2 4.5h11.6M4.2 7.5h11.6M4.2 10.5h11.6M4.2 13.5h11.6" stroke="#66668a" stroke-width="1"/><path d="M2.2 8V4.4h-2.2l3.2 -3.2l3.2 3.2h-2.2V8z" fill="#1212e6"/></svg>
<svg class="i" style="left:1122px;top:32px" width="16" height="16" viewBox="0 0 16 16"><path d="M4.2 4.5h11.6M4.2 7.5h11.6M4.2 10.5h11.6M4.2 13.5h11.6" stroke="#66668a" stroke-width="1"/><path d="M2.2 7.6v3.2h-2.2l3.2 3.4l3.2 -3.4h-2.2v-3.2z" fill="#1212e6"/></svg>
<svg class="i" style="left:1145px;top:32px" width="16" height="16" viewBox="0 0 16 16"><path d="M4.2 4.5h11.6M4.2 7.5h11.6M4.2 10.5h11.6M4.2 13.5h11.6" stroke="#66668a" stroke-width="1"/><path d="M0.4 10.6h3.2v-2.2l3 3.2l-3 3.2v-2.2h-3.2z" fill="#1212e6"/></svg>
<div style="position:absolute;left:1167px;top:26px;width:111px;height:1px;background:#fff"></div>
<div style="position:absolute;left:1167px;top:26px;width:1px;height:26px;background:#fff"></div>
<div style="position:absolute;left:1167px;top:51px;width:111px;height:1px;background:#a0a0a0"></div>
<div style="position:absolute;left:1277px;top:26px;width:1px;height:26px;background:#a0a0a0"></div>
<div style="position:absolute;left:1171px;top:28px;width:1px;height:21px;background:#fff"></div>
<div style="position:absolute;left:1171px;top:28px;width:2px;height:1px;background:#fff"></div>
<div style="position:absolute;left:1173px;top:28px;width:1px;height:22px;background:#a0a0a0"></div>
<div style="position:absolute;left:1172px;top:49px;width:2px;height:1px;background:#a0a0a0"></div>
<div style="position:absolute;left:1174px;top:28px;width:1px;height:21px;background:#fff"></div>
<div style="position:absolute;left:1174px;top:28px;width:2px;height:1px;background:#fff"></div>
<div style="position:absolute;left:1176px;top:28px;width:1px;height:22px;background:#a0a0a0"></div>
<div style="position:absolute;left:1175px;top:49px;width:2px;height:1px;background:#a0a0a0"></div>
<svg class="i" style="left:1181px;top:32px" width="16" height="16" viewBox="0 0 16 16"><path d="M9 1C16.6 3.6 15.6 12.6 7 12.4C5.4 12.2 4.6 11.6 3.8 10.6C8 12.6 14.6 9.6 9 1z" fill="#a8c4c8" stroke="#7c9aa0" stroke-width="0.5"/><path d="M0.8 12.8L4.2 9.6" stroke="#e88a20" stroke-width="1.8"/><path d="M5.8 4.2L14.4 12.6" stroke="#e88a20" stroke-width="1.7"/><path d="M13.2 11.6L14.8 13" stroke="#a85a10" stroke-width="1.7"/><path d="M2.8 4.6L6.2 1.2L7.8 2.8L4.6 6.2z" fill="#5a6c70"/></svg>
<svg class="i" style="left:1204px;top:32px" width="16" height="16" viewBox="0 0 16 16"><path d="M0 6h8.6l1.6 -1.8h0.8v6.4H0z" fill="url(#gtrk)"/><path d="M11 5h2.6l2.4 2.6v3H11z" fill="url(#gcab)"/><path d="M11.8 5.6h1.6l1.2 1.4h-2.8z" fill="#e8ffff"/><rect x="0" y="10.4" width="16" height="0.8" fill="#303030"/><circle cx="3.6" cy="10.8" r="1.8" fill="#181818"/><circle cx="3.6" cy="10.8" r="0.8" fill="#ffff80"/><circle cx="13.2" cy="10.8" r="1.8" fill="#181818"/><circle cx="13.2" cy="10.8" r="0.8" fill="#ffff80"/><rect x="0.6" y="13.2" width="15" height="0.8" fill="#a0a0a0"/><rect x="2" y="13.2" width="3.4" height="0.8" fill="#606060"/><rect x="11.6" y="13.2" width="3.4" height="0.8" fill="#606060"/></svg>
<svg class="i" style="left:1227px;top:32px" width="16" height="16" viewBox="0 0 16 16"><ellipse cx="8" cy="5.2" rx="2.7" ry="1.25" fill="#e85e00"/><ellipse cx="7.8" cy="4.9" rx="1.5" ry="0.45" fill="#ffa850"/><ellipse cx="5.2" cy="7.6" rx="2.7" ry="1.25" fill="#e85e00"/><ellipse cx="5.0" cy="7.3" rx="1.5" ry="0.45" fill="#ffa850"/><ellipse cx="10.8" cy="7.6" rx="2.7" ry="1.25" fill="#e85e00"/><ellipse cx="10.600000000000001" cy="7.3" rx="1.5" ry="0.45" fill="#ffa850"/><ellipse cx="2.8" cy="10" rx="2.7" ry="1.25" fill="#e85e00"/><ellipse cx="2.5999999999999996" cy="9.7" rx="1.5" ry="0.45" fill="#ffa850"/><ellipse cx="8" cy="10" rx="2.7" ry="1.25" fill="#e85e00"/><ellipse cx="7.8" cy="9.7" rx="1.5" ry="0.45" fill="#ffa850"/><ellipse cx="13.2" cy="10" rx="2.7" ry="1.25" fill="#e85e00"/><ellipse cx="13.0" cy="9.7" rx="1.5" ry="0.45" fill="#ffa850"/></svg>
<svg class="i" style="left:1256px;top:32px" width="16" height="16" viewBox="0 0 16 16"><g transform="translate(0.4 -0.2) scale(0.52)"><ellipse cx="8" cy="5.2" rx="2.7" ry="1.25" fill="#e85e00"/><ellipse cx="7.8" cy="4.9" rx="1.5" ry="0.45" fill="#ffa850"/><ellipse cx="5.2" cy="7.6" rx="2.7" ry="1.25" fill="#e85e00"/><ellipse cx="5.0" cy="7.3" rx="1.5" ry="0.45" fill="#ffa850"/><ellipse cx="10.8" cy="7.6" rx="2.7" ry="1.25" fill="#e85e00"/><ellipse cx="10.600000000000001" cy="7.3" rx="1.5" ry="0.45" fill="#ffa850"/><ellipse cx="2.8" cy="10" rx="2.7" ry="1.25" fill="#e85e00"/><ellipse cx="2.5999999999999996" cy="9.7" rx="1.5" ry="0.45" fill="#ffa850"/><ellipse cx="8" cy="10" rx="2.7" ry="1.25" fill="#e85e00"/><ellipse cx="7.8" cy="9.7" rx="1.5" ry="0.45" fill="#ffa850"/><ellipse cx="13.2" cy="10" rx="2.7" ry="1.25" fill="#e85e00"/><ellipse cx="13.0" cy="9.7" rx="1.5" ry="0.45" fill="#ffa850"/></g><path d="M0 6h8.6l1.6 -1.8h0.8v6.4H0z" fill="url(#gtrk)"/><path d="M11 5h2.6l2.4 2.6v3H11z" fill="url(#gcab)"/><path d="M11.8 5.6h1.6l1.2 1.4h-2.8z" fill="#e8ffff"/><rect x="0" y="10.4" width="16" height="0.8" fill="#303030"/><circle cx="3.6" cy="10.8" r="1.8" fill="#181818"/><circle cx="3.6" cy="10.8" r="0.8" fill="#ffff80"/><circle cx="13.2" cy="10.8" r="1.8" fill="#181818"/><circle cx="13.2" cy="10.8" r="0.8" fill="#ffff80"/><rect x="0.6" y="13.2" width="15" height="0.8" fill="#a0a0a0"/><rect x="2" y="13.2" width="3.4" height="0.8" fill="#606060"/><rect x="11.6" y="13.2" width="3.4" height="0.8" fill="#606060"/></svg>
<div style="position:absolute;left:1249px;top:28px;width:1px;height:22px;background:#a0a0a0"></div>
<div style="position:absolute;left:1250px;top:28px;width:1px;height:22px;background:#fff"></div>
<div style="position:absolute;left:1278px;top:26px;width:59px;height:1px;background:#fff"></div>
<div style="position:absolute;left:1278px;top:26px;width:1px;height:26px;background:#fff"></div>
<div style="position:absolute;left:1278px;top:51px;width:59px;height:1px;background:#a0a0a0"></div>
<div style="position:absolute;left:1336px;top:26px;width:1px;height:26px;background:#a0a0a0"></div>
<div style="position:absolute;left:1282px;top:28px;width:1px;height:21px;background:#fff"></div>
<div style="position:absolute;left:1282px;top:28px;width:2px;height:1px;background:#fff"></div>
<div style="position:absolute;left:1284px;top:28px;width:1px;height:22px;background:#a0a0a0"></div>
<div style="position:absolute;left:1283px;top:49px;width:2px;height:1px;background:#a0a0a0"></div>
<div style="position:absolute;left:1285px;top:28px;width:1px;height:21px;background:#fff"></div>
<div style="position:absolute;left:1285px;top:28px;width:2px;height:1px;background:#fff"></div>
<div style="position:absolute;left:1287px;top:28px;width:1px;height:22px;background:#a0a0a0"></div>
<div style="position:absolute;left:1286px;top:49px;width:2px;height:1px;background:#a0a0a0"></div>
<svg class="i" style="left:1292px;top:32px" width="16" height="16" viewBox="0 0 16 16"><path d="M0.6 8.6L8.4 10.6L16 7V10.4L8.4 14.4L0.6 12z" fill="#fff"/><path d="M8.4 10.6L16 7V10.4L8.4 14.4z" fill="#dfe4f0"/><path d="M1 8.2C-0.2 9.4 -0.2 11 1 12.2" stroke="#f03838" stroke-width="1" fill="none"/><path d="M0.8 8.4L8.4 10.4L16 6.6" stroke="#f03838" stroke-width="1.5" fill="none"/><path d="M0.8 12.2L8.4 14.4L16 10.6" stroke="#f03838" stroke-width="1" stroke-dasharray="1.6 0.8" fill="none"/><path d="M3 5L9.4 2.2L15 3.4V6.6L9 10L3 8.2z" fill="#fff"/><path d="M9 7L15 3.6V6.6L9 10z" fill="#dfe4f0"/><path d="M2.6 4.6L9.4 2L15.2 3.2L9 6.8z" fill="#e858a8"/><path d="M2.6 4.6V8.2" stroke="#e858a8" stroke-width="1"/></svg>
<svg class="i" style="left:1315px;top:32px" width="16" height="16" viewBox="0 0 16 16"><path d="M0.6 8.6L8.4 10.6L16 7V10.4L8.4 14.4L0.6 12z" fill="#fff"/><path d="M8.4 10.6L16 7V10.4L8.4 14.4z" fill="#dfe4f0"/><path d="M1 8.2C-0.2 9.4 -0.2 11 1 12.2" stroke="#1c94e4" stroke-width="1" fill="none"/><path d="M0.8 8.4L8.4 10.4L16 6.6" stroke="#1c94e4" stroke-width="1.5" fill="none"/><path d="M0.8 12.2L8.4 14.4L16 10.6" stroke="#1c94e4" stroke-width="1" stroke-dasharray="1.6 0.8" fill="none"/><path d="M3 5L9.4 2.2L15 3.4V6.6L9 10L3 8.2z" fill="#fff"/><path d="M9 7L15 3.6V6.6L9 10z" fill="#dfe4f0"/><path d="M2.6 4.6L9.4 2L15.2 3.2L9 6.8z" fill="#2236cc"/><path d="M2.6 4.6V8.2" stroke="#2236cc" stroke-width="1"/></svg>
<div style="position:absolute;left:2px;top:52px;width:888px;height:1px;background:#fff"></div>
<div style="position:absolute;left:2px;top:52px;width:1px;height:26px;background:#fff"></div>
<div style="position:absolute;left:2px;top:77px;width:888px;height:1px;background:#a0a0a0"></div>
<div style="position:absolute;left:889px;top:52px;width:1px;height:26px;background:#a0a0a0"></div>
<div style="position:absolute;left:5px;top:54px;width:1px;height:21px;background:#fff"></div>
<div style="position:absolute;left:5px;top:54px;width:2px;height:1px;background:#fff"></div>
<div style="position:absolute;left:7px;top:54px;width:1px;height:22px;background:#a0a0a0"></div>
<div style="position:absolute;left:6px;top:75px;width:2px;height:1px;background:#a0a0a0"></div>
<div style="position:absolute;left:8px;top:54px;width:1px;height:21px;background:#fff"></div>
<div style="position:absolute;left:8px;top:54px;width:2px;height:1px;background:#fff"></div>
<div style="position:absolute;left:10px;top:54px;width:1px;height:22px;background:#a0a0a0"></div>
<div style="position:absolute;left:9px;top:75px;width:2px;height:1px;background:#a0a0a0"></div>
<div class="t " style="left:16px;top:58px;font-size:12px;line-height:14px;color:#a0a0a0;letter-spacing:-0.190px;">Ресурсы</div>
<div class="t " style="left:72px;top:58px;font-size:12px;line-height:14px;color:#a0a0a0;letter-spacing:-0.083px;">Панель цен</div>
<div class="t " style="left:145px;top:58px;font-size:12px;line-height:14px;color:#a0a0a0;letter-spacing:-0.070px;">Лимит. затраты</div>
<div class="t " style="left:239px;top:58px;font-size:12px;line-height:14px;color:#a0a0a0;letter-spacing:-0.600px;">ЭСН</div>
<div class="t " style="left:272px;top:58px;font-size:12px;line-height:14px;color:#a0a0a0;letter-spacing:-0.185px;">Состав работ</div>
<div class="t " style="left:354px;top:58px;font-size:12px;line-height:14px;color:#a0a0a0;letter-spacing:-0.242px;">Тех. часть</div>
<div class="t " style="left:417px;top:58px;font-size:12px;line-height:14px;color:#a0a0a0;letter-spacing:-0.134px;">Индексы</div>
<div class="t " style="left:476px;top:58px;font-size:12px;line-height:14px;color:#a0a0a0;letter-spacing:0.064px;">Поправки</div>
<div class="t " style="left:539px;top:58px;font-size:12px;line-height:14px;color:#a0a0a0;letter-spacing:0.254px;">Формулы</div>
<div class="t " style="left:602px;top:58px;font-size:12px;line-height:14px;color:#a0a0a0;letter-spacing:-0.215px;">Структура</div>
<div class="t " style="left:667px;top:58px;font-size:12px;line-height:14px;color:#a0a0a0;letter-spacing:-0.091px;">Оглавление</div>
<div class="t " style="left:745px;top:58px;font-size:12px;line-height:14px;color:#000;letter-spacing:0.123px;">Список открытых окон</div>
<svg class="i" style="left:877px;top:63px" width="5" height="3" viewBox="0 0 5 3" shape-rendering="crispEdges"><path d="M0 0h5v1h-1v1h-1v1h-1v-1h-1v-1h-1z" fill="#000"/></svg>
<div style="position:absolute;left:1px;top:78px;width:1748px;height:1px;background:#fff"></div>
<div style="position:absolute;left:2px;top:78px;width:1125px;height:1px;background:#fff"></div>
<div style="position:absolute;left:2px;top:78px;width:1px;height:26px;background:#fff"></div>
<div style="position:absolute;left:2px;top:103px;width:1125px;height:1px;background:#a0a0a0"></div>
<div style="position:absolute;left:1126px;top:78px;width:1px;height:26px;background:#a0a0a0"></div>
<div style="position:absolute;left:5px;top:80px;width:1px;height:21px;background:#fff"></div>
<div style="position:absolute;left:5px;top:80px;width:2px;height:1px;background:#fff"></div>
<div style="position:absolute;left:7px;top:80px;width:1px;height:22px;background:#a0a0a0"></div>
<div style="position:absolute;left:6px;top:101px;width:2px;height:1px;background:#a0a0a0"></div>
<div style="position:absolute;left:8px;top:80px;width:1px;height:21px;background:#fff"></div>
<div style="position:absolute;left:8px;top:80px;width:2px;height:1px;background:#fff"></div>
<div style="position:absolute;left:10px;top:80px;width:1px;height:22px;background:#a0a0a0"></div>
<div style="position:absolute;left:9px;top:101px;width:2px;height:1px;background:#a0a0a0"></div>
<div class="t " style="left:17px;top:85px;font-size:12px;line-height:14px;color:#000;letter-spacing:0.118px;">Справочники</div>
<div class="t " style="left:171px;top:85px;font-size:12px;line-height:14px;color:#000;letter-spacing:-0.156px;">Аналитика</div>
<div class="t " style="left:242px;top:85px;font-size:12px;line-height:14px;color:#000;letter-spacing:-0.025px;">Стройки</div>
<div class="t " style="left:301px;top:85px;font-size:12px;line-height:14px;color:#000;letter-spacing:0.014px;">Нормативы</div>
<div class="t " style="left:378px;top:85px;font-size:12px;line-height:14px;color:#000;letter-spacing:-0.164px;">ЭСН и методики</div>
<div class="t " style="left:480px;top:85px;font-size:12px;line-height:14px;color:#000;letter-spacing:0.114px;">Поисковые маршруты</div>
<div class="t " style="left:618px;top:85px;font-size:12px;line-height:14px;color:#000;letter-spacing:0.078px;">Справочник расчётных формул</div>
<div class="t " style="left:808px;top:85px;font-size:12px;line-height:14px;color:#000;letter-spacing:-0.075px;">Шаблоны Сводных Расчётов</div>
<div class="t " style="left:979px;top:85px;font-size:12px;line-height:14px;color:#000;letter-spacing:0.064px;">Поправки</div>
<div class="t " style="left:1046px;top:85px;font-size:12px;line-height:14px;color:#000;letter-spacing:-0.054px;">Организации</div>
<div style="position:absolute;left:100px;top:81px;width:1px;height:20px;background:#a0a0a0"></div>
<div style="position:absolute;left:101px;top:81px;width:1px;height:20px;background:#fff"></div>
<div style="position:absolute;left:104px;top:81px;width:61px;height:21px;background:#f8f8f8;box-shadow:inset 1px 1px 0 #a0a0a0, inset -1px -1px 0 #fff"></div>
<div class="t " style="left:111px;top:86px;font-size:12px;line-height:14px;color:#000;letter-spacing:0.121px;">Проекты</div>
<div style="position:absolute;left:2px;top:104px;width:158px;height:1px;background:#fff"></div>
<div style="position:absolute;left:2px;top:104px;width:1px;height:26px;background:#fff"></div>
<div style="position:absolute;left:2px;top:129px;width:158px;height:1px;background:#a0a0a0"></div>
<div style="position:absolute;left:159px;top:104px;width:1px;height:26px;background:#a0a0a0"></div>
<div style="position:absolute;left:5px;top:106px;width:1px;height:21px;background:#fff"></div>
<div style="position:absolute;left:5px;top:106px;width:2px;height:1px;background:#fff"></div>
<div style="position:absolute;left:7px;top:106px;width:1px;height:22px;background:#a0a0a0"></div>
<div style="position:absolute;left:6px;top:127px;width:2px;height:1px;background:#a0a0a0"></div>
<div style="position:absolute;left:8px;top:106px;width:1px;height:21px;background:#fff"></div>
<div style="position:absolute;left:8px;top:106px;width:2px;height:1px;background:#fff"></div>
<div style="position:absolute;left:10px;top:106px;width:1px;height:22px;background:#a0a0a0"></div>
<div style="position:absolute;left:9px;top:127px;width:2px;height:1px;background:#a0a0a0"></div>
<div class="t " style="left:17px;top:110px;font-size:12px;line-height:14px;color:#000;letter-spacing:-0.221px;">Действие</div>
<div class="t " style="left:80px;top:110px;font-size:12px;line-height:14px;color:#000;letter-spacing:-0.573px;">Вид</div>
<div style="position:absolute;left:108px;top:106px;width:1px;height:22px;background:#a0a0a0"></div>
<div style="position:absolute;left:109px;top:106px;width:1px;height:22px;background:#fff"></div>
<svg class="i" style="left:115px;top:110px" width="16" height="16" viewBox="0 0 16 16"><path d="M0.4 0.4h6.2l1 1.8h8v11.4h-15.2z" fill="url(#gfu)" stroke="#948060" stroke-width="0.9"/><path d="M6.5 6v4.5h4.6" stroke="#000" stroke-width="1.1" fill="none"/><path d="M4.2 6.6L6.5 3.8L8.8 6.6z" fill="#000"/></svg>
<svg class="i" style="left:138px;top:110px" width="16" height="16" viewBox="0 0 16 16"><path d="M0.4 0.4h6.2l1 1.8h8v11.4h-15.2z" fill="url(#gfg)" stroke="#8c7c8c" stroke-width="0.8"/><path d="M6 7.5h4" stroke="#000" stroke-width="1.1"/></svg>
<div style="position:absolute;left:160px;top:104px;width:563px;height:1px;background:#fff"></div>
<div style="position:absolute;left:160px;top:104px;width:1px;height:26px;background:#fff"></div>
<div style="position:absolute;left:160px;top:129px;width:563px;height:1px;background:#a0a0a0"></div>
<div style="position:absolute;left:722px;top:104px;width:1px;height:26px;background:#a0a0a0"></div>
<div style="position:absolute;left:164px;top:106px;width:1px;height:21px;background:#fff"></div>
<div style="position:absolute;left:164px;top:106px;width:2px;height:1px;background:#fff"></div>
<div style="position:absolute;left:166px;top:106px;width:1px;height:22px;background:#a0a0a0"></div>
<div style="position:absolute;left:165px;top:127px;width:2px;height:1px;background:#a0a0a0"></div>
<div style="position:absolute;left:167px;top:106px;width:1px;height:21px;background:#fff"></div>
<div style="position:absolute;left:167px;top:106px;width:2px;height:1px;background:#fff"></div>
<div style="position:absolute;left:169px;top:106px;width:1px;height:22px;background:#a0a0a0"></div>
<div style="position:absolute;left:168px;top:127px;width:2px;height:1px;background:#a0a0a0"></div>
<svg class="i" style="left:174px;top:110px" width="16" height="16" viewBox="0 0 16 16"><path d="M7.6 13.4A5.6 5.6 0 0 1 3 4.4" stroke="#159a15" stroke-width="2.1" fill="none"/><path d="M0.8 5.6L5.6 0.8L6.4 6.6z" fill="#159a15"/><path d="M8.4 1.6A5.6 5.6 0 0 1 13 10.6" stroke="#0b7a0b" stroke-width="2.1" fill="none"/><path d="M15.2 9.4L10.4 14.2L9.6 8.4z" fill="#0b7a0b"/></svg>
<div style="position:absolute;left:196px;top:106px;width:1px;height:22px;background:#a0a0a0"></div>
<div style="position:absolute;left:197px;top:106px;width:1px;height:22px;background:#fff"></div>
<div style="position:absolute;left:198px;top:106px;width:1px;height:22px;background:#a0a0a0"></div>
<svg class="i" style="left:206px;top:110px" width="16" height="16" viewBox="0 0 16 16"><rect x="0" y="5.6" width="4.6" height="8.6" fill="#b2b2b2"/><rect x="0.8" y="6.6" width="2.9999999999999996" height="0.7" fill="#e4e4e4"/><rect x="0.8" y="8.299999999999999" width="2.9999999999999996" height="0.7" fill="#e4e4e4"/><rect x="0.8" y="9.999999999999998" width="2.9999999999999996" height="0.7" fill="#e4e4e4"/><rect x="0.8" y="11.699999999999998" width="2.9999999999999996" height="0.7" fill="#e4e4e4"/><rect x="0.8" y="13.399999999999997" width="2.9999999999999996" height="0.7" fill="#e4e4e4"/><rect x="5.2" y="2.4" width="4.6" height="11.8" fill="#b2b2b2"/><rect x="6.0" y="3.4" width="2.9999999999999996" height="0.7" fill="#e4e4e4"/><rect x="6.0" y="5.1" width="2.9999999999999996" height="0.7" fill="#e4e4e4"/><rect x="6.0" y="6.8" width="2.9999999999999996" height="0.7" fill="#e4e4e4"/><rect x="6.0" y="8.5" width="2.9999999999999996" height="0.7" fill="#e4e4e4"/><rect x="6.0" y="10.2" width="2.9999999999999996" height="0.7" fill="#e4e4e4"/><rect x="6.0" y="11.899999999999999" width="2.9999999999999996" height="0.7" fill="#e4e4e4"/><rect x="6.0" y="13.599999999999998" width="2.9999999999999996" height="0.7" fill="#e4e4e4"/><rect x="10.4" y="7.2" width="4.8" height="7" fill="#b2b2b2"/><rect x="11.200000000000001" y="8.2" width="3.1999999999999997" height="0.7" fill="#e4e4e4"/><rect x="11.200000000000001" y="9.899999999999999" width="3.1999999999999997" height="0.7" fill="#e4e4e4"/><rect x="11.200000000000001" y="11.599999999999998" width="3.1999999999999997" height="0.7" fill="#e4e4e4"/><rect x="11.200000000000001" y="13.299999999999997" width="3.1999999999999997" height="0.7" fill="#e4e4e4"/><path d="M5.2 0.4l1 2h-1z" fill="#303030"/><rect x="7" y="0" width="6.8" height="6.8" rx="0.7" fill="#909090"/><path d="M7.54 3.40L13.26 3.40M10.40 0.54L10.40 6.26M8.38 1.38L12.42 5.42M8.38 5.42L12.42 1.38" stroke="#fff" stroke-width="1.02"/><circle cx="10.4" cy="3.4" r="1.77" fill="#fff"/><circle cx="10.4" cy="3.4" r="0.74" fill="#909090"/></svg>
<svg class="i" style="left:229px;top:110px" width="16" height="16" viewBox="0 0 16 16"><rect x="0" y="0.4" width="5.6" height="13" fill="#b2b2b2"/><rect x="0.8" y="1.4" width="3.9999999999999996" height="0.7" fill="#e4e4e4"/><rect x="0.8" y="3.0999999999999996" width="3.9999999999999996" height="0.7" fill="#e4e4e4"/><rect x="0.8" y="4.8" width="3.9999999999999996" height="0.7" fill="#e4e4e4"/><rect x="0.8" y="6.5" width="3.9999999999999996" height="0.7" fill="#e4e4e4"/><rect x="0.8" y="8.2" width="3.9999999999999996" height="0.7" fill="#e4e4e4"/><rect x="0.8" y="9.899999999999999" width="3.9999999999999996" height="0.7" fill="#e4e4e4"/><rect x="0.8" y="11.599999999999998" width="3.9999999999999996" height="0.7" fill="#e4e4e4"/><rect x="9" y="6.4" width="5.6" height="7" fill="#b2b2b2"/><rect x="9.8" y="7.4" width="3.9999999999999996" height="0.7" fill="#e4e4e4"/><rect x="9.8" y="9.1" width="3.9999999999999996" height="0.7" fill="#e4e4e4"/><rect x="9.8" y="10.799999999999999" width="3.9999999999999996" height="0.7" fill="#e4e4e4"/><rect x="9.8" y="12.499999999999998" width="3.9999999999999996" height="0.7" fill="#e4e4e4"/><rect x="9" y="12.8" width="5.6" height="0.8" fill="#505050"/><rect x="8" y="0" width="6.6" height="6.6" rx="0.7" fill="#909090"/><path d="M8.53 3.30L14.07 3.30M11.30 0.53L11.30 6.07M9.34 1.34L13.26 5.26M9.34 5.26L13.26 1.34" stroke="#fff" stroke-width="0.99"/><circle cx="11.3" cy="3.3" r="1.72" fill="#fff"/><circle cx="11.3" cy="3.3" r="0.72" fill="#909090"/></svg>
<svg class="i" style="left:252px;top:110px" width="16" height="16" viewBox="0 0 16 16"><rect x="3" y="1.6" width="6.6" height="12.6" fill="#b2b2b2"/><rect x="3.8" y="2.6" width="5.0" height="0.7" fill="#e4e4e4"/><rect x="3.8" y="4.3" width="5.0" height="0.7" fill="#e4e4e4"/><rect x="3.8" y="6.0" width="5.0" height="0.7" fill="#e4e4e4"/><rect x="3.8" y="7.7" width="5.0" height="0.7" fill="#e4e4e4"/><rect x="3.8" y="9.4" width="5.0" height="0.7" fill="#e4e4e4"/><rect x="3.8" y="11.1" width="5.0" height="0.7" fill="#e4e4e4"/><rect x="3.8" y="12.799999999999999" width="5.0" height="0.7" fill="#e4e4e4"/><rect x="7.2" y="-0.2" width="6.8" height="6.8" rx="0.7" fill="#909090"/><path d="M7.74 3.20L13.46 3.20M10.60 0.34L10.60 6.06M8.58 1.18L12.62 5.22M8.58 5.22L12.62 1.18" stroke="#fff" stroke-width="1.02"/><circle cx="10.6" cy="3.1999999999999997" r="1.77" fill="#fff"/><circle cx="10.6" cy="3.1999999999999997" r="0.74" fill="#909090"/></svg>
<svg class="i" style="left:274px;top:110px" width="16" height="16" viewBox="0 0 16 16"><rect x="1" y="1" width="2.6" height="14.6" fill="#909090"/><path d="M1.8 2.5h1v2h-1zM1.8 6h1v2h-1zM1.8 9.5h1v2h-1zM1.8 13h1v1.6h-1z" fill="#fff"/><rect x="1" y="1" width="11.5" height="0.9" fill="#909090"/><rect x="3.6" y="14.7" width="2.4" height="0.9" fill="#909090"/><path d="M0 0.3h2.2v1.4h-2.2zM12 0h1.8v8h-1.8z" fill="#9a6af0"/><path d="M9.6 2.4L14.6 8H5.6z" fill="#a070f8"/><path d="M13.6 5h1.8v3.4h-1.8z" fill="#8a7af0"/><path d="M9.6 2L4.6 8.2M9.6 2L15 8.2" stroke="#8a2a2a" stroke-width="0.9" fill="none"/><rect x="4" y="8" width="11.6" height="1.6" fill="#ff8a10"/><rect x="4" y="9.4" width="11.6" height="1.3" fill="#b8441a"/><rect x="7" y="11" width="3.6" height="4.8" fill="#1a8cff"/><rect x="12" y="11" width="4" height="4.8" fill="#1a8cff"/><rect x="14.8" y="5.5" width="1.2" height="6" fill="#3a78f0"/><path d="M7.8 12h0.9v0.9h-0.9zM9.2 12h0.9v0.9h-0.9zM7.8 13.7h0.9v0.9h-0.9zM9.2 13.7h0.9v0.9h-0.9zM12.8 12h0.9v0.9h-0.9zM14.3 12h0.9v0.9h-0.9zM12.8 13.7h0.9v0.9h-0.9zM14.3 13.7h0.9v0.9h-0.9z" fill="#9fd4ff"/><rect x="9" y="-0.8" width="6.8" height="6.8" rx="0.7" fill="#f59a23"/><path d="M9.54 2.60L15.26 2.60M12.40 -0.26L12.40 5.46M10.38 0.58L14.42 4.62M10.38 4.62L14.42 0.58" stroke="#fff" stroke-width="1.02"/><circle cx="12.4" cy="2.5999999999999996" r="1.77" fill="#fff"/><circle cx="12.4" cy="2.5999999999999996" r="0.74" fill="#f59a23"/></svg>
<svg class="i" style="left:297px;top:110px" width="16" height="16" viewBox="0 0 16 16"><rect x="1" y="1" width="2.6" height="14.6" fill="#909090"/><path d="M1.8 2.5h1v2h-1zM1.8 6h1v2h-1zM1.8 9.5h1v2h-1zM1.8 13h1v1.6h-1z" fill="#fff"/><rect x="1" y="1" width="11.5" height="0.9" fill="#909090"/><rect x="3.6" y="14.7" width="2.4" height="0.9" fill="#909090"/><path d="M0 0.3h2.2v1.4h-2.2zM12 0h1.8v8h-1.8z" fill="#9a6af0"/><path d="M9.6 2.4L14.6 8H5.6z" fill="#a070f8"/><path d="M13.6 5h1.8v3.4h-1.8z" fill="#8a7af0"/><path d="M9.6 2L4.6 8.2M9.6 2L15 8.2" stroke="#8a2a2a" stroke-width="0.9" fill="none"/><rect x="4" y="8" width="11.6" height="1.6" fill="#ff8a10"/><rect x="4" y="9.4" width="11.6" height="1.3" fill="#b8441a"/><rect x="7" y="11" width="3.6" height="4.8" fill="#1a8cff"/><rect x="12" y="11" width="4" height="4.8" fill="#1a8cff"/><rect x="14.8" y="5.5" width="1.2" height="6" fill="#3a78f0"/><path d="M7.8 12h0.9v0.9h-0.9zM9.2 12h0.9v0.9h-0.9zM7.8 13.7h0.9v0.9h-0.9zM9.2 13.7h0.9v0.9h-0.9zM12.8 12h0.9v0.9h-0.9zM14.3 12h0.9v0.9h-0.9zM12.8 13.7h0.9v0.9h-0.9zM14.3 13.7h0.9v0.9h-0.9z" fill="#9fd4ff"/><rect x="4" y="7" width="10" height="9" fill="#f0f0f0" opacity="0.55"/><rect x="4.6" y="7.4" width="8" height="3.4" rx="1" fill="#1a6cf0"/><rect x="5.2" y="7.8" width="6.8" height="1.2" rx="0.5" fill="#6ab0ff"/><path d="M12.6 9h1.8v3.2H8.6v1.6" stroke="#101010" stroke-width="1" fill="none"/><rect x="7.4" y="13.4" width="2.4" height="1.8" fill="#e81818"/><rect x="9" y="-0.8" width="6.8" height="6.8" rx="0.7" fill="#f59a23"/><path d="M9.54 2.60L15.26 2.60M12.40 -0.26L12.40 5.46M10.38 0.58L14.42 4.62M10.38 4.62L14.42 0.58" stroke="#fff" stroke-width="1.02"/><circle cx="12.4" cy="2.5999999999999996" r="1.77" fill="#fff"/><circle cx="12.4" cy="2.5999999999999996" r="0.74" fill="#f59a23"/></svg>
<svg class="i" style="left:320px;top:110px" width="16" height="16" viewBox="0 0 16 16"><path d="M0.3 8.6L11 12.2L15.8 3.8V6.6L11 15.4L0.3 11.6z" fill="#e9edf0"/><path d="M0.3 11L11 14.7L15.8 6" stroke="#b8c0c4" stroke-width="0.8" fill="none"/><path d="M5.4 0.3L15.8 3.2L11 12.2L0.3 8.4z" fill="#3fa35f"/><path d="M5.4 0.3L15.8 3.2L15 4.6L5 1.6z" fill="#2e8a4c"/><path d="M7.4 3.6L12.6 5.1" stroke="#fff" stroke-width="1.3" opacity="0.85"/><rect x="9" y="0" width="6.8" height="6.8" rx="0.7" fill="#f59a23"/><path d="M9.54 3.40L15.26 3.40M12.40 0.54L12.40 6.26M10.38 1.38L14.42 5.42M10.38 5.42L14.42 1.38" stroke="#fff" stroke-width="1.02"/><circle cx="12.4" cy="3.4" r="1.77" fill="#fff"/><circle cx="12.4" cy="3.4" r="0.74" fill="#f59a23"/></svg>
<svg class="i" style="left:343px;top:110px" width="16" height="16" viewBox="0 0 16 16"><g opacity="0.6"><path d="M0.3 8.6L11 12.2L15.8 3.8V6.6L11 15.4L0.3 11.6z" fill="#e9edf0"/><path d="M0.3 11L11 14.7L15.8 6" stroke="#b8c0c4" stroke-width="0.8" fill="none"/><path d="M5.4 0.3L15.8 3.2L11 12.2L0.3 8.4z" fill="#3fa35f"/><path d="M5.4 0.3L15.8 3.2L15 4.6L5 1.6z" fill="#2e8a4c"/><path d="M7.4 3.6L12.6 5.1" stroke="#fff" stroke-width="1.3" opacity="0.85"/></g><rect x="4.6" y="7.4" width="8" height="3.4" rx="1" fill="#1a6cf0"/><rect x="5.2" y="7.8" width="6.8" height="1.2" rx="0.5" fill="#6ab0ff"/><path d="M12.6 9h1.8v3.2H8.6v1.6" stroke="#101010" stroke-width="1" fill="none"/><rect x="7.4" y="13.4" width="2.4" height="1.8" fill="#e81818"/><rect x="9" y="0" width="6.8" height="6.8" rx="0.7" fill="#f59a23"/><path d="M9.54 3.40L15.26 3.40M12.40 0.54L12.40 6.26M10.38 1.38L14.42 5.42M10.38 5.42L14.42 1.38" stroke="#fff" stroke-width="1.02"/><circle cx="12.4" cy="3.4" r="1.77" fill="#fff"/><circle cx="12.4" cy="3.4" r="0.74" fill="#f59a23"/></svg>
<svg class="i" style="left:373px;top:110px" width="16" height="16" viewBox="0 0 16 16"><path d="M2.6 9V15.3H13.4V9L8 3.2z" fill="#fff" stroke="#909090" stroke-width="0.9"/><rect x="2.6" y="1" width="2" height="4.6" fill="#f0a030" stroke="#c87818" stroke-width="0.6"/><path d="M10.6 4.2h2.6v3z" fill="#f0a030"/><path d="M0.8 9.4L8 2L15.2 9.4" stroke="#d8801c" stroke-width="1.15" fill="none"/><rect x="4.2" y="9.2" width="2.6" height="6" fill="#ffb030" stroke="#c87818" stroke-width="0.6"/><rect x="9" y="9" width="2.8" height="3.2" fill="#4aa0f0" stroke="#2a70c8" stroke-width="0.5"/><rect x="1" y="15" width="14" height="1" fill="#909090"/><rect x="8.6" y="0" width="6.8" height="6.8" rx="0.7" fill="#f59a23"/><path d="M9.14 3.40L14.86 3.40M12.00 0.54L12.00 6.26M9.98 1.38L14.02 5.42M9.98 5.42L14.02 1.38" stroke="#fff" stroke-width="1.02"/><circle cx="12.0" cy="3.4" r="1.77" fill="#fff"/><circle cx="12.0" cy="3.4" r="0.74" fill="#f59a23"/></svg>
<svg class="i" style="left:396px;top:110px" width="16" height="16" viewBox="0 0 16 16"><path d="M2.6 9V15.3H13.4V9L8 3.2z" fill="#fff" stroke="#909090" stroke-width="0.9"/><rect x="2.6" y="1" width="2" height="4.6" fill="#f0a030" stroke="#c87818" stroke-width="0.6"/><path d="M0.8 9.4L8 2L15.2 9.4" stroke="#d8801c" stroke-width="1.15" fill="none"/><rect x="1" y="15" width="14" height="1" fill="#909090"/><rect x="4.6" y="7.4" width="8" height="3.4" rx="1" fill="#1a6cf0"/><rect x="5.2" y="7.8" width="6.8" height="1.2" rx="0.5" fill="#6ab0ff"/><path d="M12.6 9h1.8v3.2H8.6v1.6" stroke="#101010" stroke-width="1" fill="none"/><rect x="7.4" y="13.4" width="2.4" height="1.8" fill="#e81818"/><rect x="8.6" y="0" width="6.8" height="6.8" rx="0.7" fill="#f59a23"/><path d="M9.14 3.40L14.86 3.40M12.00 0.54L12.00 6.26M9.98 1.38L14.02 5.42M9.98 5.42L14.02 1.38" stroke="#fff" stroke-width="1.02"/><circle cx="12.0" cy="3.4" r="1.77" fill="#fff"/><circle cx="12.0" cy="3.4" r="0.74" fill="#f59a23"/></svg>
<svg class="i" style="left:424px;top:110px" width="16" height="16" viewBox="0 0 16 16"><rect x="0.5" y="0.5" width="15" height="13" fill="#fff" stroke="#a8a8a8"/><rect x="0" y="-0.8" width="6.4" height="6.4" rx="0.7" fill="#9c9c9c"/><path d="M0.51 2.40L5.89 2.40M3.20 -0.29L3.20 5.09M1.30 0.50L5.10 4.30M1.30 4.30L5.10 0.50" stroke="#fff" stroke-width="0.96"/><circle cx="3.2" cy="2.4000000000000004" r="1.66" fill="#fff"/><circle cx="3.2" cy="2.4000000000000004" r="0.70" fill="#9c9c9c"/><text x="10" y="12.4" font-family="Liberation Sans,sans-serif" font-size="8.6" fill="#000" text-anchor="middle">Р</text></svg>
<svg class="i" style="left:447px;top:110px" width="16" height="16" viewBox="0 0 16 16"><rect x="0.5" y="0.5" width="15" height="13" fill="#fff" stroke="#a8a8a8"/><rect x="0" y="-0.8" width="6.4" height="6.4" rx="0.7" fill="#9c9c9c"/><path d="M0.51 2.40L5.89 2.40M3.20 -0.29L3.20 5.09M1.30 0.50L5.10 4.30M1.30 4.30L5.10 0.50" stroke="#fff" stroke-width="0.96"/><circle cx="3.2" cy="2.4000000000000004" r="1.66" fill="#fff"/><circle cx="3.2" cy="2.4000000000000004" r="0.70" fill="#9c9c9c"/><text x="9" y="12.4" font-family="Liberation Sans,sans-serif" font-size="8.6" fill="#000" text-anchor="middle">ПР</text></svg>
<svg class="i" style="left:470px;top:110px" width="16" height="16" viewBox="0 0 16 16"><path d="M8 1L13.4 6.6H10.2V12.6H5.8V6.6H2.6z" fill="#9c9c9c"/></svg>
<svg class="i" style="left:493px;top:110px" width="16" height="16" viewBox="0 0 16 16"><path d="M8 12.8L13.4 7.2H10.2V1.2H5.8V7.2H2.6z" fill="#9c9c9c"/></svg>
<svg class="i" style="left:522px;top:110px" width="16" height="16" viewBox="0 0 16 16"><g transform="translate(3 0.4) scale(1.0)"><path d="M1.6 5V9.6H8.4V5L5 1.4z" fill="#fff" stroke="#c0a090" stroke-width="0.5"/><path d="M0.2 5.4L5 0.4L9.8 5.4" stroke="#8b3610" stroke-width="1.0" fill="none"/><rect x="3" y="6" width="1.8" height="3.6" fill="#f0a840"/><rect x="6" y="5.6" width="1.8" height="1.8" fill="#70b0ff"/></g><g transform="translate(0 7) scale(0.78)"><path d="M1.6 5V9.6H8.4V5L5 1.4z" fill="#fff" stroke="#c0a090" stroke-width="0.5"/><path d="M0.2 5.4L5 0.4L9.8 5.4" stroke="#8b3610" stroke-width="1.0" fill="none"/><rect x="3" y="6" width="1.8" height="3.6" fill="#f0a840"/><rect x="6" y="5.6" width="1.8" height="1.8" fill="#70b0ff"/></g><g transform="translate(7.8 7) scale(0.78)"><path d="M1.6 5V9.6H8.4V5L5 1.4z" fill="#fff" stroke="#c0a090" stroke-width="0.5"/><path d="M0.2 5.4L5 0.4L9.8 5.4" stroke="#8b3610" stroke-width="1.0" fill="none"/><rect x="3" y="6" width="1.8" height="3.6" fill="#f0a840"/><rect x="6" y="5.6" width="1.8" height="1.8" fill="#70b0ff"/></g></svg>
<svg class="i" style="left:545px;top:110px" width="16" height="16" viewBox="0 0 16 16"><rect x="2.6" y="1.6" width="12.4" height="10.6" fill="#3aa890" stroke="#507870" stroke-width="0.6"/><rect x="0.4" y="3.4" width="12.6" height="10.6" fill="url(#gteal)" stroke="#507870" stroke-width="0.6"/><text x="6.6" y="12" font-family="Liberation Sans,sans-serif" font-size="8.4" font-weight="bold" fill="#fff" text-anchor="middle">%</text><rect x="9.4" y="-1" width="6.6" height="6.6" rx="0.7" fill="#f59a23"/><path d="M9.93 2.30L15.47 2.30M12.70 -0.47L12.70 5.07M10.74 0.34L14.66 4.26M10.74 4.26L14.66 0.34" stroke="#fff" stroke-width="0.99"/><circle cx="12.7" cy="2.3" r="1.72" fill="#fff"/><circle cx="12.7" cy="2.3" r="0.72" fill="#f59a23"/></svg>
<svg class="i" style="left:574px;top:110px" width="16" height="16" viewBox="0 0 16 16"><rect x="0" y="0.6" width="15.6" height="13" fill="#e8f8f0"/><rect x="0" y="9" width="15.6" height="4.6" fill="#fff" opacity="0.6"/><path d="M0 13.8h15.8V0.6" stroke="#a0a0a0" stroke-width="0.9" fill="none"/><text x="1.2" y="13" font-family="Liberation Sans,sans-serif" font-size="13" fill="#000" textLength="11" lengthAdjust="spacingAndGlyphs">%</text><rect x="9.4" y="-1" width="6.6" height="6.6" rx="0.7" fill="#f59a23"/><path d="M9.93 2.30L15.47 2.30M12.70 -0.47L12.70 5.07M10.74 0.34L14.66 4.26M10.74 4.26L14.66 0.34" stroke="#fff" stroke-width="0.99"/><circle cx="12.7" cy="2.3" r="1.72" fill="#fff"/><circle cx="12.7" cy="2.3" r="0.72" fill="#f59a23"/></svg>
<svg class="i" style="left:597px;top:110px" width="16" height="16" viewBox="0 0 16 16"><rect x="0" y="0.6" width="15.6" height="13" fill="#e2f6de"/><rect x="0" y="9" width="15.6" height="4.6" fill="#fff" opacity="0.6"/><path d="M0 13.8h15.8V0.6" stroke="#a0a0a0" stroke-width="0.9" fill="none"/><text x="1.2" y="13" font-family="Liberation Sans,sans-serif" font-size="10.5" fill="#000" textLength="13.6" lengthAdjust="spacingAndGlyphs">М29</text><rect x="9.4" y="-1" width="6.6" height="6.6" rx="0.7" fill="#f59a23"/><path d="M9.93 2.30L15.47 2.30M12.70 -0.47L12.70 5.07M10.74 0.34L14.66 4.26M10.74 4.26L14.66 0.34" stroke="#fff" stroke-width="0.99"/><circle cx="12.7" cy="2.3" r="1.72" fill="#fff"/><circle cx="12.7" cy="2.3" r="0.72" fill="#f59a23"/></svg>
<svg class="i" style="left:620px;top:110px" width="16" height="16" viewBox="0 0 16 16"><rect x="0" y="0.6" width="15.6" height="13" fill="#e2ecfc"/><rect x="0" y="9" width="15.6" height="4.6" fill="#fff" opacity="0.6"/><path d="M0 13.8h15.8V0.6" stroke="#a0a0a0" stroke-width="0.9" fill="none"/><text x="1.2" y="13" font-family="Liberation Sans,sans-serif" font-size="10.5" fill="#000" textLength="11.5" lengthAdjust="spacingAndGlyphs">РР</text><rect x="9.4" y="-1" width="6.6" height="6.6" rx="0.7" fill="#f59a23"/><path d="M9.93 2.30L15.47 2.30M12.70 -0.47L12.70 5.07M10.74 0.34L14.66 4.26M10.74 4.26L14.66 0.34" stroke="#fff" stroke-width="0.99"/><circle cx="12.7" cy="2.3" r="1.72" fill="#fff"/><circle cx="12.7" cy="2.3" r="0.72" fill="#f59a23"/></svg>
<svg class="i" style="left:643px;top:110px" width="16" height="16" viewBox="0 0 16 16"><rect x="0" y="0.6" width="15.6" height="13" fill="#e2f6de"/><rect x="0" y="9" width="15.6" height="4.6" fill="#fff" opacity="0.6"/><path d="M0 13.8h15.8V0.6" stroke="#a0a0a0" stroke-width="0.9" fill="none"/><text x="1.2" y="13" font-family="Liberation Sans,sans-serif" font-size="10.5" fill="#000" textLength="12.5" lengthAdjust="spacingAndGlyphs">ФЗ</text><rect x="9.4" y="-1" width="6.6" height="6.6" rx="0.7" fill="#f59a23"/><path d="M9.93 2.30L15.47 2.30M12.70 -0.47L12.70 5.07M10.74 0.34L14.66 4.26M10.74 4.26L14.66 0.34" stroke="#fff" stroke-width="0.99"/><circle cx="12.7" cy="2.3" r="1.72" fill="#fff"/><circle cx="12.7" cy="2.3" r="0.72" fill="#f59a23"/></svg>
<svg class="i" style="left:672px;top:110px" width="16" height="16" viewBox="0 0 16 16"><path d="M0.4 2h5.6l1.6 1.6h8v10H0.4z" fill="#a6a6a6" stroke="#8e8e8e" stroke-width="0.6"/><rect x="9.4" y="-0.8" width="6.6" height="6.6" rx="0.7" fill="#909090"/><path d="M9.93 2.50L15.47 2.50M12.70 -0.27L12.70 5.27M10.74 0.54L14.66 4.46M10.74 4.46L14.66 0.54" stroke="#fff" stroke-width="0.99"/><circle cx="12.7" cy="2.5" r="1.72" fill="#fff"/><circle cx="12.7" cy="2.5" r="0.72" fill="#909090"/></svg>
<svg class="i" style="left:701px;top:110px" width="16" height="16" viewBox="0 0 16 16"><path d="M3.4 1.6L13 12M12.8 1.6L3.2 12" stroke="#f0502e" stroke-width="1.6" stroke-linecap="round"/></svg>
<div style="position:absolute;left:365px;top:106px;width:1px;height:22px;background:#a0a0a0"></div>
<div style="position:absolute;left:366px;top:106px;width:1px;height:22px;background:#fff"></div>
<div style="position:absolute;left:417px;top:106px;width:1px;height:22px;background:#a0a0a0"></div>
<div style="position:absolute;left:418px;top:106px;width:1px;height:22px;background:#fff"></div>
<div style="position:absolute;left:515px;top:106px;width:1px;height:22px;background:#a0a0a0"></div>
<div style="position:absolute;left:516px;top:106px;width:1px;height:22px;background:#fff"></div>
<div style="position:absolute;left:567px;top:106px;width:1px;height:22px;background:#a0a0a0"></div>
<div style="position:absolute;left:568px;top:106px;width:1px;height:22px;background:#fff"></div>
<div style="position:absolute;left:665px;top:106px;width:1px;height:22px;background:#a0a0a0"></div>
<div style="position:absolute;left:666px;top:106px;width:1px;height:22px;background:#fff"></div>
<div style="position:absolute;left:694px;top:106px;width:1px;height:22px;background:#a0a0a0"></div>
<div style="position:absolute;left:695px;top:106px;width:1px;height:22px;background:#fff"></div>
<div style="position:absolute;left:1px;top:130px;width:1748px;height:1px;background:#fff"></div>
<div style="position:absolute;left:1px;top:131px;width:66px;height:21px;background:#f0f0f0;box-shadow:inset 1px 1px 0 #fff, inset -1px 0 0 #696969, inset -2px 0 0 #a0a0a0"></div>
<div class="t " style="left:9px;top:134px;font-size:11px;line-height:13px;color:#000;letter-spacing:-0.132px;">Структура</div>
<div style="position:absolute;left:67px;top:151px;width:616px;height:1px;background:#fff"></div>
<div style="position:absolute;left:680px;top:152px;width:2px;height:939px;background:#fff"></div>
<div style="position:absolute;left:4px;top:1089px;width:678px;height:2px;background:#fff"></div>
<div style="position:absolute;left:4px;top:154px;width:676px;height:935px;background:#fff;box-shadow:inset 1px 1px 0 #a0a0a0, inset 2px 2px 0 #696969, inset -1px -1px 0 #fff, inset -2px -2px 0 #e3e3e3"></div>
<div style="position:absolute;left:683px;top:151px;width:1px;height:942px;background:#696969"></div>
<div style="position:absolute;left:682px;top:152px;width:1px;height:940px;background:#a0a0a0"></div>
<div style="position:absolute;left:1px;top:1092px;width:683px;height:1px;background:#696969"></div>
<div style="position:absolute;left:2px;top:1091px;width:681px;height:1px;background:#a0a0a0"></div>
<div style="position:absolute;left:20px;top:164px;width:5px;height:1px;background-image:repeating-linear-gradient(to right,#808080 0 1px,transparent 1px 2px)"></div>
<div style="position:absolute;left:33px;top:172px;width:1px;height:297px;background-image:repeating-linear-gradient(to bottom,#808080 0 1px,transparent 1px 2px)"></div>
<div style="position:absolute;left:39px;top:180px;width:5px;height:1px;background-image:repeating-linear-gradient(to right,#808080 0 1px,transparent 1px 2px)"></div>
<div style="position:absolute;left:52px;top:188px;width:1px;height:201px;background-image:repeating-linear-gradient(to bottom,#808080 0 1px,transparent 1px 2px)"></div>
<div style="position:absolute;left:58px;top:196px;width:5px;height:1px;background-image:repeating-linear-gradient(to right,#808080 0 1px,transparent 1px 2px)"></div>
<div style="position:absolute;left:71px;top:204px;width:1px;height:153px;background-image:repeating-linear-gradient(to bottom,#808080 0 1px,transparent 1px 2px)"></div>
<div style="position:absolute;left:77px;top:212px;width:5px;height:1px;background-image:repeating-linear-gradient(to right,#808080 0 1px,transparent 1px 2px)"></div>
<div style="position:absolute;left:90px;top:220px;width:1px;height:105px;background-image:repeating-linear-gradient(to bottom,#808080 0 1px,transparent 1px 2px)"></div>
<div style="position:absolute;left:96px;top:228px;width:5px;height:1px;background-image:repeating-linear-gradient(to right,#808080 0 1px,transparent 1px 2px)"></div>
<div style="position:absolute;left:109px;top:236px;width:1px;height:9px;background-image:repeating-linear-gradient(to bottom,#808080 0 1px,transparent 1px 2px)"></div>
<div style="position:absolute;left:111px;top:244px;width:9px;height:1px;background-image:repeating-linear-gradient(to right,#808080 0 1px,transparent 1px 2px)"></div>
<div style="position:absolute;left:96px;top:260px;width:5px;height:1px;background-image:repeating-linear-gradient(to right,#808080 0 1px,transparent 1px 2px)"></div>
<div style="position:absolute;left:96px;top:276px;width:5px;height:1px;background-image:repeating-linear-gradient(to right,#808080 0 1px,transparent 1px 2px)"></div>
<div style="position:absolute;left:92px;top:292px;width:9px;height:1px;background-image:repeating-linear-gradient(to right,#808080 0 1px,transparent 1px 2px)"></div>
<div style="position:absolute;left:92px;top:308px;width:9px;height:1px;background-image:repeating-linear-gradient(to right,#808080 0 1px,transparent 1px 2px)"></div>
<div style="position:absolute;left:92px;top:324px;width:9px;height:1px;background-image:repeating-linear-gradient(to right,#808080 0 1px,transparent 1px 2px)"></div>
<div style="position:absolute;left:77px;top:340px;width:5px;height:1px;background-image:repeating-linear-gradient(to right,#808080 0 1px,transparent 1px 2px)"></div>
<div style="position:absolute;left:77px;top:356px;width:5px;height:1px;background-image:repeating-linear-gradient(to right,#808080 0 1px,transparent 1px 2px)"></div>
<div style="position:absolute;left:58px;top:372px;width:5px;height:1px;background-image:repeating-linear-gradient(to right,#808080 0 1px,transparent 1px 2px)"></div>
<div style="position:absolute;left:58px;top:388px;width:5px;height:1px;background-image:repeating-linear-gradient(to right,#808080 0 1px,transparent 1px 2px)"></div>
<div style="position:absolute;left:39px;top:404px;width:5px;height:1px;background-image:repeating-linear-gradient(to right,#808080 0 1px,transparent 1px 2px)"></div>
<div style="position:absolute;left:39px;top:420px;width:5px;height:1px;background-image:repeating-linear-gradient(to right,#808080 0 1px,transparent 1px 2px)"></div>
<div style="position:absolute;left:39px;top:436px;width:5px;height:1px;background-image:repeating-linear-gradient(to right,#808080 0 1px,transparent 1px 2px)"></div>
<div style="position:absolute;left:35px;top:452px;width:9px;height:1px;background-image:repeating-linear-gradient(to right,#808080 0 1px,transparent 1px 2px)"></div>
<div style="position:absolute;left:39px;top:468px;width:5px;height:1px;background-image:repeating-linear-gradient(to right,#808080 0 1px,transparent 1px 2px)"></div>
<div style="position:absolute;left:10px;top:160px;width:9px;height:9px;background:#fff;border:1px solid #808080;box-sizing:border-box"></div>
<div style="position:absolute;left:12px;top:164px;width:5px;height:1px;background:#000"></div>
<svg class="i" style="left:25px;top:156px" width="16" height="16" viewBox="0 0 16 16"><path d="M0 14L5.7 2L11.4 14z" fill="#2f6fd0"/><path d="M2.2 13L5.7 5L7 13z" fill="#5a9af0"/><rect x="10" y="7" width="5.3" height="6.8" fill="#6fb52c"/><rect x="11" y="8" width="3.5" height="4.8" fill="#8fd040"/><circle cx="7" cy="10.9" r="4" fill="#e8281a"/><circle cx="6" cy="9.6" r="1.6" fill="#ff8a70"/></svg>
<div class="t " style="left:47px;top:158px;font-size:11px;line-height:13px;color:#000;letter-spacing:0.123px;">Проекты</div>
<div style="position:absolute;left:29px;top:176px;width:9px;height:9px;background:#fff;border:1px solid #808080;box-sizing:border-box"></div>
<div style="position:absolute;left:31px;top:180px;width:5px;height:1px;background:#000"></div>
<svg class="i" style="left:44px;top:172px" width="16" height="16" viewBox="0 0 16 16"><rect x="6.4" y="4" width="5" height="11.6" fill="#2f72d8"/><rect x="1" y="7.2" width="5.4" height="8.4" fill="#3a7ede"/><rect x="11.4" y="8.2" width="4.6" height="7.4" fill="#3a7ede"/><rect x="2" y="8.4" width="3" height="1" fill="#b4d4ff"/><rect x="2" y="10.4" width="3" height="1" fill="#b4d4ff"/><rect x="2" y="12.4" width="3" height="1" fill="#b4d4ff"/><rect x="2" y="14.4" width="3" height="1" fill="#b4d4ff"/><rect x="7.4" y="5.2" width="3" height="1" fill="#b4d4ff"/><rect x="7.4" y="7.2" width="3" height="1" fill="#b4d4ff"/><rect x="7.4" y="9.2" width="3" height="1" fill="#b4d4ff"/><rect x="7.4" y="11.2" width="3" height="1" fill="#b4d4ff"/><rect x="7.4" y="13.2" width="3" height="1" fill="#b4d4ff"/><rect x="12.4" y="9.4" width="2.8" height="1" fill="#b4d4ff"/><rect x="12.4" y="11.4" width="2.8" height="1" fill="#b4d4ff"/><rect x="12.4" y="13.4" width="2.8" height="1" fill="#b4d4ff"/><rect x="6.4" y="0.8" width="0.8" height="3.4" fill="#404040"/><path d="M7.2 0.8h2.4l1.6 1.6h-4z" fill="#ea1c24"/></svg>
<div class="t " style="left:66px;top:174px;font-size:11px;line-height:13px;color:#000;letter-spacing:0.076px;">Здание спортивного комплекса</div>
<div class="t " style="left:235px;top:174px;font-size:11px;line-height:13px;color:#0000ff;">[5]</div>
<div style="position:absolute;left:48px;top:192px;width:9px;height:9px;background:#fff;border:1px solid #808080;box-sizing:border-box"></div>
<div style="position:absolute;left:50px;top:196px;width:5px;height:1px;background:#000"></div>
<svg class="i" style="left:63px;top:188px" width="16" height="16" viewBox="0 0 16 16"><rect x="1" y="1" width="2.6" height="14.6" fill="#909090"/><path d="M1.8 2.5h1v2h-1zM1.8 6h1v2h-1zM1.8 9.5h1v2h-1zM1.8 13h1v1.6h-1z" fill="#fff"/><rect x="1" y="1" width="11.5" height="0.9" fill="#909090"/><rect x="3.6" y="14.7" width="2.4" height="0.9" fill="#909090"/><path d="M0 0.3h2.2v1.4h-2.2zM12 0h1.8v8h-1.8z" fill="#9a6af0"/><path d="M9.6 2.4L14.6 8H5.6z" fill="#a070f8"/><path d="M13.6 5h1.8v3.4h-1.8z" fill="#8a7af0"/><path d="M9.6 2L4.6 8.2M9.6 2L15 8.2" stroke="#8a2a2a" stroke-width="0.9" fill="none"/><rect x="4" y="8" width="11.6" height="1.6" fill="#ff8a10"/><rect x="4" y="9.4" width="11.6" height="1.3" fill="#b8441a"/><rect x="7" y="11" width="3.6" height="4.8" fill="#1a8cff"/><rect x="12" y="11" width="4" height="4.8" fill="#1a8cff"/><rect x="14.8" y="5.5" width="1.2" height="6" fill="#3a78f0"/><path d="M7.8 12h0.9v0.9h-0.9zM9.2 12h0.9v0.9h-0.9zM7.8 13.7h0.9v0.9h-0.9zM9.2 13.7h0.9v0.9h-0.9zM12.8 12h0.9v0.9h-0.9zM14.3 12h0.9v0.9h-0.9zM12.8 13.7h0.9v0.9h-0.9zM14.3 13.7h0.9v0.9h-0.9z" fill="#9fd4ff"/></svg>
<div class="t " style="left:85px;top:190px;font-size:11px;line-height:13px;color:#000;letter-spacing:0.020px;">Объекты подсобного и обслуживающего назначения</div>
<div class="t " style="left:362.5px;top:190px;font-size:11px;line-height:13px;color:#0000ff;">[2]</div>
<div style="position:absolute;left:67px;top:208px;width:9px;height:9px;background:#fff;border:1px solid #808080;box-sizing:border-box"></div>
<div style="position:absolute;left:69px;top:212px;width:5px;height:1px;background:#000"></div>
<svg class="i" style="left:82px;top:204px" width="16" height="16" viewBox="0 0 16 16"><path d="M0.3 8.6L11 12.2L15.8 3.8V6.6L11 15.4L0.3 11.6z" fill="#e9edf0"/><path d="M0.3 11L11 14.7L15.8 6" stroke="#b8c0c4" stroke-width="0.8" fill="none"/><path d="M5.4 0.3L15.8 3.2L11 12.2L0.3 8.4z" fill="#3fa35f"/><path d="M5.4 0.3L15.8 3.2L15 4.6L5 1.6z" fill="#2e8a4c"/><path d="M7.4 3.6L12.6 5.1" stroke="#fff" stroke-width="1.3" opacity="0.85"/></svg>
<div class="t " style="left:104px;top:206px;font-size:11px;line-height:13px;color:#000;letter-spacing:0.026px;">Новая локальная смета</div>
<div style="position:absolute;left:86px;top:224px;width:9px;height:9px;background:#fff;border:1px solid #808080;box-sizing:border-box"></div>
<div style="position:absolute;left:88px;top:228px;width:5px;height:1px;background:#000"></div>
<svg class="i" style="left:101px;top:220px" width="16" height="16" viewBox="0 0 16 16"><path d="M0 1h8.4l1.2 1.8h6.4v12.2h-16z" fill="#9c9494"/><path d="M1 2h6.8l1 1.4h-7.8z" fill="#30a8ff"/><rect x="1" y="3.6" width="14" height="10.4" fill="url(#gfb)"/></svg>
<div class="t " style="left:123px;top:222px;font-size:11px;line-height:13px;color:#000;letter-spacing:0.240px;">СТРУКТУРА</div>
<svg class="i" style="left:120px;top:236px" width="16" height="16" viewBox="0 0 16 16"><path d="M0.5 9.2L11 13.2L15.8 4.6V6.2L11 15L0.5 11z" fill="#dfe4e0"/><path d="M0.5 10.6L11 14.6L15.8 6" stroke="#9aa89c" stroke-width="0.7" fill="none"/><path d="M7.2 1L15.8 3.6L11 12.6L0.5 8.8z" fill="#2fcf3f"/><path d="M7.2 1L15.8 3.6L15.2 4.8L6.4 2.2z" fill="#1fae30"/><path d="M8.6 3.4L12.8 4.7" stroke="#b8ffc0" stroke-width="1.2" opacity="0.8"/></svg>
<div style="position:absolute;left:139px;top:236px;width:127px;height:16px;background:#0078d7"></div>
<div class="t " style="left:142px;top:238px;font-size:11px;line-height:13px;color:#fff;">Новая локальная смета</div>
<div style="position:absolute;left:86px;top:256px;width:9px;height:9px;background:#fff;border:1px solid #808080;box-sizing:border-box"></div>
<div style="position:absolute;left:88px;top:260px;width:5px;height:1px;background:#000"></div>
<div style="position:absolute;left:90px;top:258px;width:1px;height:5px;background:#000"></div>
<svg class="i" style="left:101px;top:252px" width="16" height="16" viewBox="0 0 16 16"><path d="M0 1h8.4l1.2 1.8h6.4v12.2h-16z" fill="#9c9494"/><path d="M1 2h6.8l1 1.4h-7.8z" fill="#30a8ff"/><rect x="1" y="3.6" width="14" height="10.4" fill="url(#gfb)"/></svg>
<div class="t " style="left:123px;top:254px;font-size:11px;line-height:13px;color:#000;letter-spacing:-0.356px;">СМЕТЫ</div>
<div style="position:absolute;left:86px;top:272px;width:9px;height:9px;background:#fff;border:1px solid #808080;box-sizing:border-box"></div>
<div style="position:absolute;left:88px;top:276px;width:5px;height:1px;background:#000"></div>
<div style="position:absolute;left:90px;top:274px;width:1px;height:5px;background:#000"></div>
<svg class="i" style="left:101px;top:268px" width="16" height="16" viewBox="0 0 16 16"><path d="M0 1h8.4l1.2 1.8h6.4v12.2h-16z" fill="#9c9494"/><path d="M1 2h6.8l1 1.4h-7.8z" fill="#30a8ff"/><rect x="1" y="3.6" width="14" height="10.4" fill="url(#gfb)"/></svg>
<div class="t " style="left:123px;top:270px;font-size:11px;line-height:13px;color:#000;letter-spacing:-0.072px;">ВЫПОЛНЕНИЯ</div>
<svg class="i" style="left:101px;top:284px" width="16" height="16" viewBox="0 0 16 16"><path d="M0 1h8.4l1.2 1.8h6.4v12.2h-16z" fill="#9c9494"/><path d="M1 2h6.8l1 1.4h-7.8z" fill="#30a8ff"/><rect x="1" y="3.6" width="14" height="10.4" fill="url(#gfb)"/></svg>
<div class="t " style="left:123px;top:286px;font-size:11px;line-height:13px;color:#000;letter-spacing:-0.266px;">М-29</div>
<svg class="i" style="left:101px;top:300px" width="16" height="16" viewBox="0 0 16 16"><path d="M0 1h8.4l1.2 1.8h6.4v12.2h-16z" fill="#9c9494"/><path d="M1 2h6.8l1 1.4h-7.8z" fill="#30a8ff"/><rect x="1" y="3.6" width="14" height="10.4" fill="url(#gfb)"/></svg>
<div class="t " style="left:123px;top:302px;font-size:11px;line-height:13px;color:#000;letter-spacing:-0.110px;">РЕСУРСНЫЕ РАСЧЕТЫ</div>
<svg class="i" style="left:101px;top:316px" width="16" height="16" viewBox="0 0 16 16"><path d="M0 1h8.4l1.2 1.8h6.4v12.2h-16z" fill="#9c9494"/><path d="M1 2h6.8l1 1.4h-7.8z" fill="#30a8ff"/><rect x="1" y="3.6" width="14" height="10.4" fill="url(#gfb)"/></svg>
<div class="t " style="left:123px;top:318px;font-size:11px;line-height:13px;color:#000;letter-spacing:-0.254px;">КС-3</div>
<div style="position:absolute;left:67px;top:336px;width:9px;height:9px;background:#fff;border:1px solid #808080;box-sizing:border-box"></div>
<div style="position:absolute;left:69px;top:340px;width:5px;height:1px;background:#000"></div>
<div style="position:absolute;left:71px;top:338px;width:1px;height:5px;background:#000"></div>
<svg class="i" style="left:82px;top:332px" width="16" height="16" viewBox="0 0 16 16"><path d="M0.3 8.6L11 12.2L15.8 3.8V6.6L11 15.4L0.3 11.6z" fill="#e9edf0"/><path d="M0.3 11L11 14.7L15.8 6" stroke="#b8c0c4" stroke-width="0.8" fill="none"/><path d="M5.4 0.3L15.8 3.2L11 12.2L0.3 8.4z" fill="#3fa35f"/><path d="M5.4 0.3L15.8 3.2L15 4.6L5 1.6z" fill="#2e8a4c"/><path d="M7.4 3.6L12.6 5.1" stroke="#fff" stroke-width="1.3" opacity="0.85"/></svg>
<div class="t " style="left:104px;top:334px;font-size:11px;line-height:13px;color:#000;letter-spacing:0.026px;">Новая локальная смета</div>
<div style="position:absolute;left:67px;top:352px;width:9px;height:9px;background:#fff;border:1px solid #808080;box-sizing:border-box"></div>
<div style="position:absolute;left:69px;top:356px;width:5px;height:1px;background:#000"></div>
<div style="position:absolute;left:71px;top:354px;width:1px;height:5px;background:#000"></div>
<svg class="i" style="left:82px;top:348px" width="16" height="16" viewBox="0 0 16 16"><path d="M0.3 8.6L11 12.2L15.8 3.8V6.6L11 15.4L0.3 11.6z" fill="#e9edf0"/><path d="M0.3 11L11 14.7L15.8 6" stroke="#b8c0c4" stroke-width="0.8" fill="none"/><path d="M5.4 0.3L15.8 3.2L11 12.2L0.3 8.4z" fill="#3fa35f"/><path d="M5.4 0.3L15.8 3.2L15 4.6L5 1.6z" fill="#2e8a4c"/><path d="M7.4 3.6L12.6 5.1" stroke="#fff" stroke-width="1.3" opacity="0.85"/></svg>
<div class="t " style="left:104px;top:350px;font-size:11px;line-height:13px;color:#000;letter-spacing:0.037px;">Объекты подсобного назначения</div>
<div style="position:absolute;left:48px;top:368px;width:9px;height:9px;background:#fff;border:1px solid #808080;box-sizing:border-box"></div>
<div style="position:absolute;left:50px;top:372px;width:5px;height:1px;background:#000"></div>
<div style="position:absolute;left:52px;top:370px;width:1px;height:5px;background:#000"></div>
<svg class="i" style="left:63px;top:364px" width="16" height="16" viewBox="0 0 16 16"><rect x="1" y="1" width="2.6" height="14.6" fill="#909090"/><path d="M1.8 2.5h1v2h-1zM1.8 6h1v2h-1zM1.8 9.5h1v2h-1zM1.8 13h1v1.6h-1z" fill="#fff"/><rect x="1" y="1" width="11.5" height="0.9" fill="#909090"/><rect x="3.6" y="14.7" width="2.4" height="0.9" fill="#909090"/><path d="M0 0.3h2.2v1.4h-2.2zM12 0h1.8v8h-1.8z" fill="#9a6af0"/><path d="M9.6 2.4L14.6 8H5.6z" fill="#a070f8"/><path d="M13.6 5h1.8v3.4h-1.8z" fill="#8a7af0"/><path d="M9.6 2L4.6 8.2M9.6 2L15 8.2" stroke="#8a2a2a" stroke-width="0.9" fill="none"/><rect x="4" y="8" width="11.6" height="1.6" fill="#ff8a10"/><rect x="4" y="9.4" width="11.6" height="1.3" fill="#b8441a"/><rect x="7" y="11" width="3.6" height="4.8" fill="#1a8cff"/><rect x="12" y="11" width="4" height="4.8" fill="#1a8cff"/><rect x="14.8" y="5.5" width="1.2" height="6" fill="#3a78f0"/><path d="M7.8 12h0.9v0.9h-0.9zM9.2 12h0.9v0.9h-0.9zM7.8 13.7h0.9v0.9h-0.9zM9.2 13.7h0.9v0.9h-0.9zM12.8 12h0.9v0.9h-0.9zM14.3 12h0.9v0.9h-0.9zM12.8 13.7h0.9v0.9h-0.9zM14.3 13.7h0.9v0.9h-0.9z" fill="#9fd4ff"/></svg>
<div class="t " style="left:85px;top:366px;font-size:11px;line-height:13px;color:#000;letter-spacing:0.055px;">Основные объекты строительства</div>
<div class="t " style="left:269px;top:366px;font-size:11px;line-height:13px;color:#0000ff;">[2]</div>
<div style="position:absolute;left:48px;top:384px;width:9px;height:9px;background:#fff;border:1px solid #808080;box-sizing:border-box"></div>
<div style="position:absolute;left:50px;top:388px;width:5px;height:1px;background:#000"></div>
<div style="position:absolute;left:52px;top:386px;width:1px;height:5px;background:#000"></div>
<svg class="i" style="left:63px;top:380px" width="16" height="16" viewBox="0 0 16 16"><rect x="1" y="1" width="2.6" height="14.6" fill="#909090"/><path d="M1.8 2.5h1v2h-1zM1.8 6h1v2h-1zM1.8 9.5h1v2h-1zM1.8 13h1v1.6h-1z" fill="#fff"/><rect x="1" y="1" width="11.5" height="0.9" fill="#909090"/><rect x="3.6" y="14.7" width="2.4" height="0.9" fill="#909090"/><path d="M0 0.3h2.2v1.4h-2.2zM12 0h1.8v8h-1.8z" fill="#9a6af0"/><path d="M9.6 2.4L14.6 8H5.6z" fill="#a070f8"/><path d="M13.6 5h1.8v3.4h-1.8z" fill="#8a7af0"/><path d="M9.6 2L4.6 8.2M9.6 2L15 8.2" stroke="#8a2a2a" stroke-width="0.9" fill="none"/><rect x="4" y="8" width="11.6" height="1.6" fill="#ff8a10"/><rect x="4" y="9.4" width="11.6" height="1.3" fill="#b8441a"/><rect x="7" y="11" width="3.6" height="4.8" fill="#1a8cff"/><rect x="12" y="11" width="4" height="4.8" fill="#1a8cff"/><rect x="14.8" y="5.5" width="1.2" height="6" fill="#3a78f0"/><path d="M7.8 12h0.9v0.9h-0.9zM9.2 12h0.9v0.9h-0.9zM7.8 13.7h0.9v0.9h-0.9zM9.2 13.7h0.9v0.9h-0.9zM12.8 12h0.9v0.9h-0.9zM14.3 12h0.9v0.9h-0.9zM12.8 13.7h0.9v0.9h-0.9zM14.3 13.7h0.9v0.9h-0.9z" fill="#9fd4ff"/></svg>
<div class="t " style="left:85px;top:382px;font-size:11px;line-height:13px;color:#000;letter-spacing:0.058px;">Подготовка территории строительства</div>
<div class="t " style="left:291px;top:382px;font-size:11px;line-height:13px;color:#0000ff;">[1]</div>
<div style="position:absolute;left:29px;top:400px;width:9px;height:9px;background:#fff;border:1px solid #808080;box-sizing:border-box"></div>
<div style="position:absolute;left:31px;top:404px;width:5px;height:1px;background:#000"></div>
<div style="position:absolute;left:33px;top:402px;width:1px;height:5px;background:#000"></div>
<svg class="i" style="left:44px;top:396px" width="16" height="16" viewBox="0 0 16 16"><path d="M0 1h8.4l1.2 1.8h6.4v12.2h-16z" fill="#9c9494"/><path d="M1 2h6.8l1 1.4h-7.8z" fill="#ffd030"/><rect x="1" y="3.6" width="14" height="10.4" fill="url(#gfy)"/></svg>
<div class="t " style="left:66px;top:398px;font-size:11px;line-height:13px;color:#000;letter-spacing:0.080px;">Новая папка</div>
<div class="t " style="left:138px;top:398px;font-size:11px;line-height:13px;color:#0000ff;">[31]</div>
<div style="position:absolute;left:29px;top:416px;width:9px;height:9px;background:#fff;border:1px solid #808080;box-sizing:border-box"></div>
<div style="position:absolute;left:31px;top:420px;width:5px;height:1px;background:#000"></div>
<div style="position:absolute;left:33px;top:418px;width:1px;height:5px;background:#000"></div>
<svg class="i" style="left:44px;top:412px" width="16" height="16" viewBox="0 0 16 16"><rect x="1" y="1" width="2.6" height="14.6" fill="#909090"/><path d="M1.8 2.5h1v2h-1zM1.8 6h1v2h-1zM1.8 9.5h1v2h-1zM1.8 13h1v1.6h-1z" fill="#fff"/><rect x="1" y="1" width="11.5" height="0.9" fill="#909090"/><rect x="3.6" y="14.7" width="2.4" height="0.9" fill="#909090"/><path d="M0 0.3h2.2v1.4h-2.2zM12 0h1.8v8h-1.8z" fill="#9a6af0"/><path d="M9.6 2.4L14.6 8H5.6z" fill="#a070f8"/><path d="M13.6 5h1.8v3.4h-1.8z" fill="#8a7af0"/><path d="M9.6 2L4.6 8.2M9.6 2L15 8.2" stroke="#8a2a2a" stroke-width="0.9" fill="none"/><rect x="4" y="8" width="11.6" height="1.6" fill="#ff8a10"/><rect x="4" y="9.4" width="11.6" height="1.3" fill="#b8441a"/><rect x="7" y="11" width="3.6" height="4.8" fill="#1a8cff"/><rect x="12" y="11" width="4" height="4.8" fill="#1a8cff"/><rect x="14.8" y="5.5" width="1.2" height="6" fill="#3a78f0"/><path d="M7.8 12h0.9v0.9h-0.9zM9.2 12h0.9v0.9h-0.9zM7.8 13.7h0.9v0.9h-0.9zM9.2 13.7h0.9v0.9h-0.9zM12.8 12h0.9v0.9h-0.9zM14.3 12h0.9v0.9h-0.9zM12.8 13.7h0.9v0.9h-0.9zM14.3 13.7h0.9v0.9h-0.9z" fill="#9fd4ff"/></svg>
<div class="t " style="left:66px;top:414px;font-size:11px;line-height:13px;color:#000;letter-spacing:-0.049px;">Строительство школы на 1025 человек</div>
<div class="t " style="left:271.5px;top:414px;font-size:11px;line-height:13px;color:#0000ff;">[1]</div>
<div style="position:absolute;left:29px;top:432px;width:9px;height:9px;background:#fff;border:1px solid #808080;box-sizing:border-box"></div>
<div style="position:absolute;left:31px;top:436px;width:5px;height:1px;background:#000"></div>
<div style="position:absolute;left:33px;top:434px;width:1px;height:5px;background:#000"></div>
<svg class="i" style="left:44px;top:428px" width="16" height="16" viewBox="0 0 16 16"><path d="M2.6 9V15.3H13.4V9L8 3.2z" fill="#fff" stroke="#909090" stroke-width="0.9"/><rect x="2.6" y="1" width="2" height="4.6" fill="#f0a030" stroke="#c87818" stroke-width="0.6"/><path d="M10.6 4.2h2.6v3z" fill="#f0a030"/><path d="M0.8 9.4L8 2L15.2 9.4" stroke="#d8801c" stroke-width="1.15" fill="none"/><rect x="4.2" y="9.2" width="2.6" height="6" fill="#ffb030" stroke="#c87818" stroke-width="0.6"/><rect x="9" y="9" width="2.8" height="3.2" fill="#4aa0f0" stroke="#2a70c8" stroke-width="0.5"/><rect x="1" y="15" width="14" height="1" fill="#909090"/></svg>
<div class="t " style="left:66px;top:430px;font-size:11px;line-height:13px;color:#000;letter-spacing:-0.046px;">Строительство дома</div>
<svg class="i" style="left:44px;top:444px" width="16" height="16" viewBox="0 0 16 16"><path d="M3.2 1.5h3.4l0.8 1.2h6v9h-10.2z" fill="#f6e08a" stroke="#c8b070" stroke-width="0.6"/><rect x="3.8" y="3.4" width="9" height="6" fill="#fff0a8"/><path d="M0.3 8.6C2 9 3 9.6 4.4 9.8C6 10.4 9 9.6 12 9.6L14.4 8.6V12C11 14.6 6 15.6 3.4 13.4z" fill="#f0a060"/><path d="M4.4 10.8C7 11.8 9.6 11.4 11.6 10.6" stroke="#c86a2a" stroke-width="0.8" fill="none"/><path d="M14.2 7.4L15.9 6.6V13.8L14.2 12.6z" fill="#203060"/></svg>
<div class="t " style="left:66px;top:446px;font-size:11px;line-height:13px;color:#000;letter-spacing:-0.444px;">ОБМЕН</div>
<div class="t " style="left:111px;top:446px;font-size:11px;line-height:13px;color:#0000ff;">[0]</div>
<div style="position:absolute;left:29px;top:464px;width:9px;height:9px;background:#fff;border:1px solid #808080;box-sizing:border-box"></div>
<div style="position:absolute;left:31px;top:468px;width:5px;height:1px;background:#000"></div>
<div style="position:absolute;left:33px;top:466px;width:1px;height:5px;background:#000"></div>
<svg class="i" style="left:44px;top:460px" width="16" height="16" viewBox="0 0 16 16"><path d="M4.4 3.4C4.4 0.2 11 0.2 11 3.4z" fill="#dfe8f0" stroke="#98a8b8" stroke-width="0.6"/><rect x="3.8" y="3.4" width="7.8" height="1.2" fill="#708090"/><path d="M4.6 4.6h6.2l-0.4 3h-5.4z" fill="#52606c"/><rect x="2.6" y="7.4" width="10.2" height="1.3" fill="#708090"/><path d="M4.6 8.7h6.2l0.6 6.3h-7.4z" fill="#5a6874"/><path d="M5.4 5.4h0.9v0.9h-0.9zM7.2 5.4h0.9v0.9h-0.9zM9 5.4h0.9v0.9h-0.9zM5.2 9.6h0.9v0.9h-0.9zM7.1 9.6h0.9v0.9h-0.9zM9 9.6h0.9v0.9h-0.9zM5 11.4h0.9v0.9h-0.9zM7 11.4h0.9v0.9h-0.9zM9.1 11.4h0.9v0.9h-0.9zM4.9 13.2h0.9v0.9h-0.9zM7 13.2h0.9v0.9h-0.9zM9.2 13.2h0.9v0.9h-0.9z" fill="#c8d4dc"/><rect x="3.4" y="15" width="8.6" height="0.9" fill="#48545e"/></svg>
<div class="t " style="left:66px;top:462px;font-size:11px;line-height:13px;color:#000;letter-spacing:0.031px;">КОРЗИНА</div>
<div style="position:absolute;left:687px;top:152px;width:1px;height:938px;background:#fff"></div>
<div style="position:absolute;left:688px;top:152px;width:1px;height:938px;background:#fff"></div>
<div style="position:absolute;left:688px;top:152px;width:1060px;height:1px;background:#fff"></div>
<div style="position:absolute;left:687px;top:1092px;width:1064px;height:1px;background:#696969"></div>
<div style="position:absolute;left:688px;top:1091px;width:1063px;height:1px;background:#696969"></div>
<div style="position:absolute;left:689px;top:1090px;width:1061px;height:1px;background:#a0a0a0"></div>
<div style="position:absolute;left:1749px;top:1px;width:1px;height:150px;background:#8c8c8c"></div>
<div style="position:absolute;left:1750px;top:1px;width:1px;height:150px;background:#8c8c8c"></div>
<div style="position:absolute;left:1749px;top:151px;width:1px;height:942px;background:#696969"></div>
<div style="position:absolute;left:1750px;top:151px;width:1px;height:942px;background:#696969"></div>
<div style="position:absolute;left:1748px;top:152px;width:1px;height:939px;background:#a0a0a0"></div>
<div style="position:absolute;left:691px;top:134px;width:73px;height:18px;box-shadow:inset 1px 1px 0 #fff"></div>
<div class="t " style="left:697px;top:137px;font-size:11px;line-height:13px;color:#000;letter-spacing:-0.030px;">Содержание</div>
<div style="position:absolute;left:838px;top:134px;width:100px;height:18px;box-shadow:inset 1px 1px 0 #fff, inset -1px 0 0 #696969, inset -2px 0 0 #a0a0a0"></div>
<div class="t " style="left:843px;top:137px;font-size:11px;line-height:13px;color:#000;letter-spacing:0.099px;">Объектная смета</div>
<div style="position:absolute;left:938px;top:134px;width:59px;height:18px;box-shadow:inset 1px 1px 0 #fff, inset -1px 0 0 #696969, inset -2px 0 0 #a0a0a0"></div>
<div class="t " style="left:945px;top:137px;font-size:11px;line-height:13px;color:#000;letter-spacing:-0.369px;">ССР и СЗ</div>
<div style="position:absolute;left:997px;top:134px;width:44px;height:18px;box-shadow:inset 1px 1px 0 #fff, inset -1px 0 0 #696969, inset -2px 0 0 #a0a0a0"></div>
<div class="t " style="left:1004px;top:137px;font-size:11px;line-height:13px;color:#000;letter-spacing:0.086px;">НМЦК</div>
<div style="position:absolute;left:1041px;top:134px;width:42px;height:18px;box-shadow:inset 1px 1px 0 #fff, inset -1px 0 0 #696969, inset -2px 0 0 #a0a0a0"></div>
<div class="t " style="left:1048px;top:137px;font-size:11px;line-height:13px;color:#000;letter-spacing:-0.292px;">ВОР</div>
<div style="position:absolute;left:1083px;top:134px;width:197px;height:18px;box-shadow:inset 1px 1px 0 #fff, inset -1px 0 0 #696969, inset -2px 0 0 #a0a0a0"></div>
<div class="t " style="left:1090px;top:137px;font-size:11px;line-height:13px;color:#000;letter-spacing:-0.014px;">Исполнение Сметы контракта (ЕИС)</div>
<div style="position:absolute;left:764px;top:132px;width:74px;height:20px;background:#f0f0f0;box-shadow:inset 1px 1px 0 #fff, inset -1px 0 0 #696969, inset -2px 0 0 #a0a0a0"></div>
<div class="t " style="left:772px;top:135px;font-size:11px;line-height:13px;color:#000;letter-spacing:0.040px;">Параметры</div>
<div style="position:absolute;left:698px;top:162px;width:13px;height:13px;background:#fff;box-shadow:inset 1px 1px 0 #a0a0a0, inset -1px -1px 0 #fff, inset 2px 2px 0 #e3e3e3"></div>
<div class="t " style="left:715px;top:163px;font-size:11px;line-height:13px;color:#000;letter-spacing:0.063px;">Локальная смета утверждена</div>
<div style="position:absolute;left:692px;top:187px;width:185px;height:871px;background:#fff;box-shadow:inset 1px 1px 0 #a0a0a0, inset 2px 2px 0 #696969, inset -1px -1px 0 #fff, inset -2px -2px 0 #e3e3e3"></div>
<div style="position:absolute;left:877px;top:187px;width:1px;height:871px;background:#a0a0a0"></div>
<div style="position:absolute;left:878px;top:187px;width:1px;height:871px;background:#fff"></div>
<div class="t " style="left:697px;top:191px;font-size:11px;line-height:13px;color:#000;letter-spacing:0.600px;font-weight:bold;">Параметры</div>
<div style="position:absolute;left:703px;top:206px;width:1px;height:72px;background-image:repeating-linear-gradient(to bottom,#808080 0 1px,transparent 1px 2px)"></div>
<div style="position:absolute;left:704px;top:213px;width:8px;height:1px;background-image:repeating-linear-gradient(to right,#808080 0 1px,transparent 1px 2px)"></div>
<div class="t " style="left:716px;top:207px;font-size:11px;line-height:13px;color:#000;letter-spacing:0.076px;">Наименования</div>
<div style="position:absolute;left:704px;top:229px;width:8px;height:1px;background-image:repeating-linear-gradient(to right,#808080 0 1px,transparent 1px 2px)"></div>
<div class="t " style="left:716px;top:223px;font-size:11px;line-height:13px;color:#000;letter-spacing:-0.234px;">Общие</div>
<div style="position:absolute;left:704px;top:245px;width:8px;height:1px;background-image:repeating-linear-gradient(to right,#808080 0 1px,transparent 1px 2px)"></div>
<div class="t " style="left:716px;top:239px;font-size:11px;line-height:13px;color:#000;letter-spacing:0.057px;">Должностные лица</div>
<div style="position:absolute;left:704px;top:261px;width:8px;height:1px;background-image:repeating-linear-gradient(to right,#808080 0 1px,transparent 1px 2px)"></div>
<div class="t " style="left:716px;top:255px;font-size:11px;line-height:13px;color:#000;letter-spacing:0.121px;">Поправки</div>
<div style="position:absolute;left:704px;top:277px;width:8px;height:1px;background-image:repeating-linear-gradient(to right,#808080 0 1px,transparent 1px 2px)"></div>
<div style="position:absolute;left:712px;top:269px;width:48px;height:16px;background:#f0f0f0"></div>
<div class="t " style="left:716px;top:271px;font-size:11px;line-height:13px;color:#000;letter-spacing:0.127px;">Ревизия</div>
<svg class="i" style="left:0;top:0" width="1751" height="1124" viewBox="0 0 1751 1124"><line x1="265" y1="243" x2="682" y2="279.8" stroke="#ff0000" stroke-width="3"/><path d="M679 271.5L703 280.3L679 286.5z" fill="#ff0000"/><rect x="707.5" y="267.5" width="59" height="20" fill="none" stroke="#ff0000" stroke-width="3"/></svg>
<div class="t " style="left:885px;top:195px;font-size:11px;line-height:13px;color:#000;letter-spacing:0.037px;">Состояние локальной сметы</div>
<div style="position:absolute;left:1111px;top:194px;width:626px;height:15px;background:#fff"></div>
<div style="position:absolute;left:1113px;top:196px;width:24px;height:11px;background:#c0c0c0;border:1px solid #808080;box-sizing:border-box"></div>
<div class="t " style="left:1141px;top:196px;font-size:11px;line-height:13px;color:#000;letter-spacing:0.228px;">Новая</div>
<div style="position:absolute;left:1722px;top:195px;width:14px;height:13px;background:#f0f0f0"></div>
<svg class="i" style="left:1725px;top:200px" width="7" height="4" viewBox="0 0 7 4" shape-rendering="crispEdges"><path d="M0 0h7v1h-1v1h-1v1h-1v1h-1v-1h-1v-1h-1v-1h-1z" fill="#000"/></svg>
<div class="t " style="left:885px;top:219px;font-size:11px;line-height:13px;color:#000;letter-spacing:0.071px;">Описание к состоянию локальной сметы</div>
<div style="position:absolute;left:1111px;top:219px;width:500px;height:45px;background:#f4f7fc"></div>
<div class="t " style="left:1113px;top:221px;font-size:11px;line-height:13px;color:#000;letter-spacing:0.100px;">Переведено в состояние  "Новая"</div>
<div class="t " style="left:1113px;top:234px;font-size:11px;line-height:13px;color:#000;">27.05.2025 19:23:34  пользователем  "Администратор  |  Основной администратор программного</div>
<div class="t " style="left:1113px;top:247px;font-size:11px;line-height:13px;color:#000;letter-spacing:0.031px;">комплекса  |  &lt;организация не определена&gt;"</div>
<div style="position:absolute;left:1620px;top:217px;width:120px;height:19px;border:1px solid #adadad;border-radius:3px;box-sizing:border-box;background:linear-gradient(#f4f4f4,#e6e6e6)"></div>
<div class="t " style="left:1654px;top:221px;font-size:11px;line-height:13px;color:#000;">История ...</div>
<div style="position:absolute;left:1620px;top:239px;width:120px;height:19px;border:1px solid #adadad;border-radius:3px;box-sizing:border-box;background:linear-gradient(#f4f4f4,#e6e6e6)"></div>
<div class="t " style="left:1636px;top:243px;font-size:11px;line-height:13px;color:#000;letter-spacing:-0.095px;">Архивирование ...</div>
<div class="t " style="left:885px;top:275px;font-size:11px;line-height:13px;color:#000;letter-spacing:0.117px;">Номер ревизии</div>
<div style="position:absolute;left:1111px;top:273px;width:626px;height:15px;background:#f4f7fc"></div>
<div class="t " style="left:1113px;top:275px;font-size:11px;line-height:13px;color:#000;">1</div>
<div style="position:absolute;left:1109px;top:301px;width:629px;height:1px;background:#a0a0a0"></div>
<div class="t " style="left:885px;top:315px;font-size:11px;line-height:13px;color:#000;letter-spacing:0.147px;">Дата создания локальной сметы</div>
<div style="position:absolute;left:1111px;top:313px;width:626px;height:15px;background:#f4f7fc"></div>
<div class="t " style="left:1113px;top:315px;font-size:11px;line-height:13px;color:#000;letter-spacing:-0.102px;">27.05.2025 19:23:34</div>
<div class="t " style="left:885px;top:339px;font-size:11px;line-height:13px;color:#000;letter-spacing:0.100px;">Создана пользователем</div>
<div style="position:absolute;left:1111px;top:337px;width:626px;height:15px;background:#f4f7fc"></div>
<div class="t " style="left:1113px;top:339px;font-size:11px;line-height:13px;color:#000;">Администратор  |  Основной администратор программного комплекса  |  &lt;организация не определена&gt;</div>
<div class="t " style="left:885px;top:363px;font-size:11px;line-height:13px;color:#000;letter-spacing:0.063px;">Дата утверждения</div>
<div style="position:absolute;left:1111px;top:361px;width:626px;height:15px;background:#f4f7fc"></div>
<div class="t " style="left:885px;top:387px;font-size:11px;line-height:13px;color:#000;letter-spacing:0.104px;">Утверждена пользователем</div>
<div style="position:absolute;left:1111px;top:385px;width:626px;height:15px;background:#f4f7fc"></div>
<div class="t " style="left:885px;top:411px;font-size:11px;line-height:13px;color:#000;letter-spacing:0.074px;">Дата начала разработки</div>
<div style="position:absolute;left:1111px;top:409px;width:626px;height:15px;background:#f4f7fc"></div>
<div class="t " style="left:885px;top:435px;font-size:11px;line-height:13px;color:#000;letter-spacing:0.074px;">Разработка начата пользователем</div>
<div style="position:absolute;left:1111px;top:433px;width:626px;height:15px;background:#f4f7fc"></div>
<div class="t " style="left:885px;top:459px;font-size:11px;line-height:13px;color:#000;letter-spacing:0.042px;">Дата последней редакции</div>
<div style="position:absolute;left:1111px;top:457px;width:626px;height:15px;background:#f4f7fc"></div>
<div class="t " style="left:885px;top:483px;font-size:11px;line-height:13px;color:#000;letter-spacing:0.036px;">Отредактирована пользователем</div>
<div style="position:absolute;left:1111px;top:481px;width:626px;height:15px;background:#f4f7fc"></div>
<div class="t " style="left:885px;top:507px;font-size:11px;line-height:13px;color:#000;letter-spacing:0.201px;">Дата разработки</div>
<div style="position:absolute;left:1111px;top:505px;width:626px;height:15px;background:#f4f7fc"></div>
<div class="t " style="left:885px;top:531px;font-size:11px;line-height:13px;color:#000;letter-spacing:0.076px;">Разработана пользователем</div>
<div style="position:absolute;left:1111px;top:529px;width:626px;height:15px;background:#f4f7fc"></div>
<div class="t " style="left:885px;top:555px;font-size:11px;line-height:13px;color:#000;letter-spacing:0.190px;">Дата проверки</div>
<div style="position:absolute;left:1111px;top:553px;width:626px;height:15px;background:#f4f7fc"></div>
<div class="t " style="left:885px;top:579px;font-size:11px;line-height:13px;color:#000;letter-spacing:0.050px;">Проверена пользователем</div>
<div style="position:absolute;left:1111px;top:577px;width:626px;height:15px;background:#f4f7fc"></div>
<div class="t " style="left:885px;top:603px;font-size:11px;line-height:13px;color:#000;letter-spacing:0.105px;">Дата завершения разработки</div>
<div style="position:absolute;left:1111px;top:601px;width:626px;height:15px;background:#f4f7fc"></div>
<div class="t " style="left:885px;top:627px;font-size:11px;line-height:13px;color:#000;letter-spacing:0.077px;">Разработка завершена пользователем</div>
<div style="position:absolute;left:1111px;top:625px;width:626px;height:15px;background:#f4f7fc"></div>
<div class="t " style="left:885px;top:651px;font-size:11px;line-height:13px;color:#000;letter-spacing:0.075px;">Дата создания архивной копии</div>
<div style="position:absolute;left:1111px;top:649px;width:626px;height:15px;background:#f4f7fc"></div>
<div class="t " style="left:885px;top:675px;font-size:11px;line-height:13px;color:#000;letter-spacing:0.017px;">Пользователь, создавший архивную копию</div>
<div style="position:absolute;left:1111px;top:673px;width:626px;height:15px;background:#f4f7fc"></div>
<div class="t " style="left:885px;top:699px;font-size:11px;line-height:13px;color:#000;letter-spacing:0.080px;">Дата восстановления из архива</div>
<div style="position:absolute;left:1111px;top:697px;width:626px;height:15px;background:#f4f7fc"></div>
<div class="t " style="left:885px;top:723px;font-size:11px;line-height:13px;color:#000;letter-spacing:0.042px;">Пользователь, восстановивший из архива</div>
<div style="position:absolute;left:1111px;top:721px;width:626px;height:15px;background:#f4f7fc"></div>
<div class="t " style="left:885px;top:747px;font-size:11px;line-height:13px;color:#000;letter-spacing:-0.061px;">Общее время работы</div>
<div style="position:absolute;left:1111px;top:745px;width:626px;height:15px;background:#f4f7fc"></div>
<div class="t " style="left:1113px;top:747px;font-size:11px;line-height:13px;color:#000;letter-spacing:-0.127px;">0 час. 0 мин.</div>
<div class="t " style="left:885px;top:771px;font-size:11px;line-height:13px;color:#000;letter-spacing:-0.042px;">Уникальный идентификатор (GUID)</div>
<div style="position:absolute;left:1111px;top:769px;width:626px;height:15px;background:#f4f7fc"></div>
<div class="t " style="left:1113px;top:771px;font-size:11px;line-height:13px;color:#000;letter-spacing:-0.223px;">{3BBB3B22-0989-4CB7-BD9E-3FA8AD29DA7B}</div>
<div class="t " style="left:885px;top:795px;font-size:11px;line-height:13px;color:#000;letter-spacing:-0.101px;">Контрольная сумма (CRC)</div>
<div style="position:absolute;left:1111px;top:793px;width:626px;height:15px;background:#f4f7fc"></div>
<div class="t " style="left:1113px;top:795px;font-size:11px;line-height:13px;color:#000;letter-spacing:-0.232px;">7B8CD5DA</div>
<div style="position:absolute;left:692px;top:1058px;width:1054px;height:1px;background:#a0a0a0"></div>
<div style="position:absolute;left:692px;top:1058px;width:1px;height:29px;background:#a0a0a0"></div>
<div style="position:absolute;left:692px;top:1087px;width:1055px;height:1px;background:#fff"></div>
<div style="position:absolute;left:692px;top:1088px;width:1055px;height:1px;background:#fff"></div>
<div style="position:absolute;left:1746px;top:1058px;width:1px;height:31px;background:#fff"></div>
<div style="position:absolute;left:1554px;top:1061px;width:93px;height:25px;background:#f0f0f0;box-shadow:inset 1px 1px 0 #fff, inset -1px -1px 0 #696969, inset -2px -2px 0 #a0a0a0"></div>
<div class="t " style="left:1573px;top:1068px;font-size:11px;line-height:13px;color:#a0a0a0;letter-spacing:0.128px;text-shadow:1px 1px 0 #fff;"><u>П</u>рименить</div>
<div style="position:absolute;left:1649px;top:1061px;width:93px;height:25px;background:#f0f0f0;box-shadow:inset 1px 1px 0 #fff, inset -1px -1px 0 #696969, inset -2px -2px 0 #a0a0a0"></div>
<div class="t " style="left:1678px;top:1068px;font-size:11px;line-height:13px;color:#a0a0a0;letter-spacing:-0.081px;text-shadow:1px 1px 0 #fff;"><u>О</u>тмена</div>
<div style="position:absolute;left:0px;top:1093px;width:1751px;height:1px;background:#fff"></div>
<div style="position:absolute;left:0px;top:1094px;width:1751px;height:1px;background:#fff"></div>
<div style="position:absolute;left:0px;top:1095px;width:1751px;height:1px;background:#fff"></div>
<div style="position:absolute;left:0px;top:1123px;width:1751px;height:1px;background:#828282"></div>
<div style="position:absolute;left:3px;top:1096px;width:85px;height:26px;box-shadow:inset 1px 1px 0 #a0a0a0, inset -1px -1px 0 #fff"></div>
<div style="position:absolute;left:92px;top:1096px;width:296px;height:26px;box-shadow:inset 1px 1px 0 #a0a0a0, inset -1px -1px 0 #fff"></div>
<div style="position:absolute;left:392px;top:1096px;width:1289px;height:26px;box-shadow:inset 1px 1px 0 #a0a0a0, inset -1px -1px 0 #fff"></div>
<div style="position:absolute;left:1685px;top:1096px;width:30px;height:26px;box-shadow:inset 1px 1px 0 #a0a0a0, inset -1px -1px 0 #fff"></div>
<div style="position:absolute;left:1719px;top:1096px;width:30px;height:26px;box-shadow:inset 1px 1px 0 #a0a0a0, inset -1px -1px 0 #fff"></div>
<div style="position:absolute;left:89px;top:1095px;width:1px;height:28px;background:#a0a0a0"></div>
<div style="position:absolute;left:90px;top:1095px;width:1px;height:28px;background:#fff"></div>
<div style="position:absolute;left:389px;top:1095px;width:1px;height:28px;background:#a0a0a0"></div>
<div style="position:absolute;left:390px;top:1095px;width:1px;height:28px;background:#fff"></div>
<div style="position:absolute;left:1682px;top:1095px;width:1px;height:28px;background:#a0a0a0"></div>
<div style="position:absolute;left:1683px;top:1095px;width:1px;height:28px;background:#fff"></div>
<div style="position:absolute;left:1716px;top:1095px;width:1px;height:28px;background:#a0a0a0"></div>
<div style="position:absolute;left:1717px;top:1095px;width:1px;height:28px;background:#fff"></div>
<svg class="i" style="left:1692px;top:1101px" width="16" height="16" viewBox="0 0 16 16"><circle cx="8" cy="8" r="8" fill="#0078d7"/><rect x="7" y="6.5" width="2" height="6" fill="#fff"/><rect x="7" y="3.5" width="2" height="2" fill="#fff"/></svg>
<div class="t " style="left:1726px;top:1102px;font-size:12px;line-height:14px;color:#000;letter-spacing:-0.600px;">RU</div>
</body></html>
